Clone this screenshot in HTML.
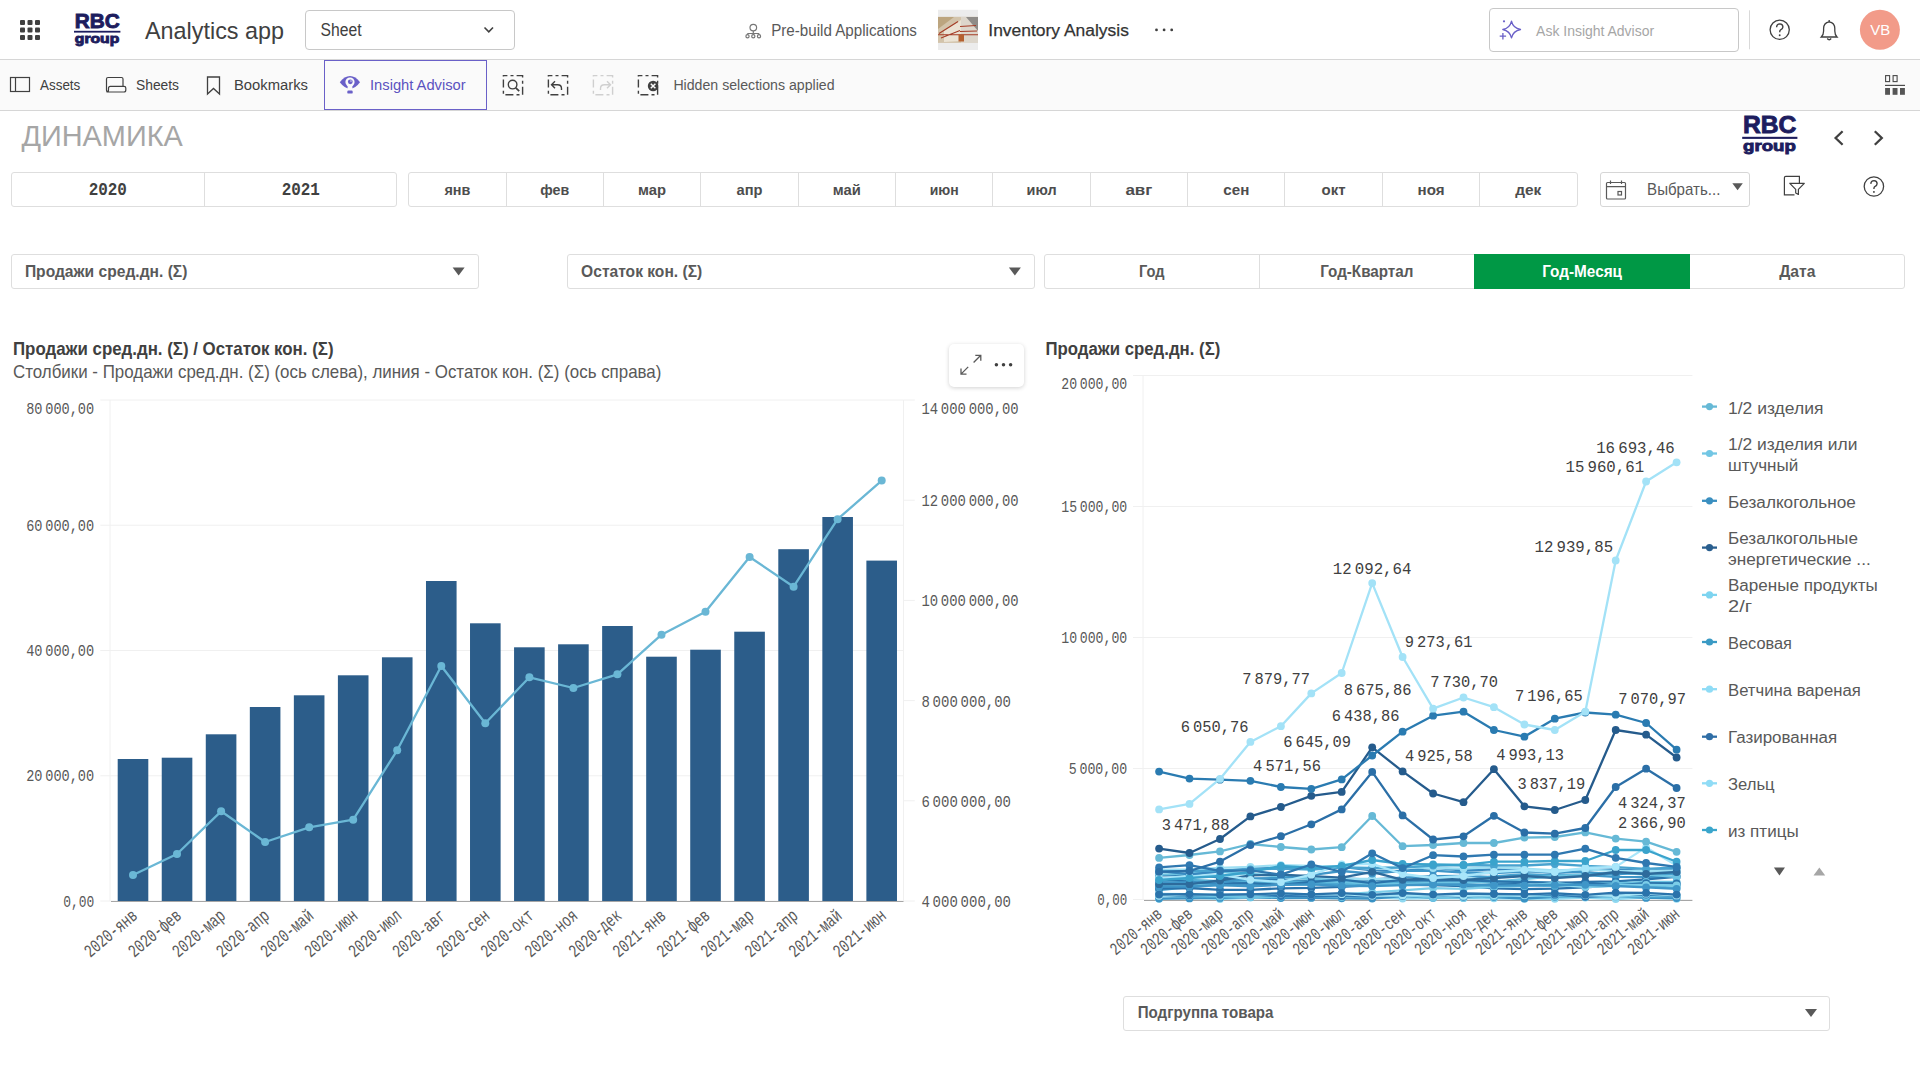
<!DOCTYPE html>
<html><head><meta charset="utf-8"><title>Analytics app - ДИНАМИКА</title>
<style>
html,body{margin:0;padding:0;}
body{width:1920px;height:1080px;overflow:hidden;background:#fff;position:relative;font-family:"Liberation Sans",sans-serif;}
.box{position:absolute;box-sizing:border-box;}
</style></head><body>
<div class="box" style="left:0;top:0;width:1920px;height:60px;background:#fff;border-bottom:1px solid #d6d6d6"></div>
<div class="box" style="left:0;top:60px;width:1920px;height:51px;background:#fafafa;border-bottom:1px solid #d6d6d6"></div>
<div class="box" style="left:305px;top:10px;width:210px;height:40px;border:1px solid #c8c8c8;border-radius:4px;background:#fff"></div>
<div class="box" style="left:1489px;top:8px;width:250px;height:44px;border:1px solid #c8c8c8;border-radius:4px;background:#fff"></div>
<div class="box" style="left:324px;top:60px;width:163px;height:50px;border:1px solid #6a60c8;background:#fafafa"></div>
<div class="box" style="left:11px;top:172px;width:386px;height:35px;border:1px solid #dedede;border-radius:3px;background:#fff"></div>
<div class="box" style="left:204px;top:172px;width:1px;height:35px;background:#dedede"></div>
<div class="box" style="left:408px;top:172px;width:1170px;height:35px;border:1px solid #dedede;border-radius:3px;background:#fff"></div>
<div class="box" style="left:505.6px;top:172px;width:1px;height:35px;background:#dedede"></div>
<div class="box" style="left:603.0px;top:172px;width:1px;height:35px;background:#dedede"></div>
<div class="box" style="left:700.3px;top:172px;width:1px;height:35px;background:#dedede"></div>
<div class="box" style="left:797.7px;top:172px;width:1px;height:35px;background:#dedede"></div>
<div class="box" style="left:895.0px;top:172px;width:1px;height:35px;background:#dedede"></div>
<div class="box" style="left:992.4px;top:172px;width:1px;height:35px;background:#dedede"></div>
<div class="box" style="left:1089.7px;top:172px;width:1px;height:35px;background:#dedede"></div>
<div class="box" style="left:1187.1px;top:172px;width:1px;height:35px;background:#dedede"></div>
<div class="box" style="left:1284.4px;top:172px;width:1px;height:35px;background:#dedede"></div>
<div class="box" style="left:1381.8px;top:172px;width:1px;height:35px;background:#dedede"></div>
<div class="box" style="left:1479.1px;top:172px;width:1px;height:35px;background:#dedede"></div>
<div class="box" style="left:1600px;top:172px;width:150px;height:35px;border:1px solid #d6d6d6;border-radius:3px;background:#fff"></div>
<div class="box" style="left:11px;top:254px;width:468px;height:35px;border:1px solid #dedede;border-radius:3px;background:#fff"></div>
<div class="box" style="left:567px;top:254px;width:468px;height:35px;border:1px solid #dedede;border-radius:3px;background:#fff"></div>
<div class="box" style="left:1044px;top:254px;width:861px;height:35px;border:1px solid #dedede;border-radius:3px;background:#fff"></div>
<div class="box" style="left:1259px;top:254px;width:1px;height:35px;background:#dedede"></div>
<div class="box" style="left:1474px;top:254px;width:216px;height:35px;background:#009845"></div>
<div class="box" style="left:949px;top:344px;width:75px;height:43px;border-radius:5px;background:#fff;box-shadow:0 1px 4px rgba(0,0,0,0.18)"></div>
<div class="box" style="left:1123px;top:996px;width:707px;height:35px;border:1px solid #dedede;border-radius:3px;background:#fff"></div>
<svg width="1920" height="1080" viewBox="0 0 1920 1080" style="position:absolute;left:0;top:0">
<rect x="20.0" y="20.0" width="5" height="5" rx="1" fill="#404040"/>
<rect x="20.0" y="27.5" width="5" height="5" rx="1" fill="#404040"/>
<rect x="20.0" y="35.0" width="5" height="5" rx="1" fill="#404040"/>
<rect x="27.5" y="20.0" width="5" height="5" rx="1" fill="#404040"/>
<rect x="27.5" y="27.5" width="5" height="5" rx="1" fill="#404040"/>
<rect x="27.5" y="35.0" width="5" height="5" rx="1" fill="#404040"/>
<rect x="35.0" y="20.0" width="5" height="5" rx="1" fill="#404040"/>
<rect x="35.0" y="27.5" width="5" height="5" rx="1" fill="#404040"/>
<rect x="35.0" y="35.0" width="5" height="5" rx="1" fill="#404040"/>
<text x="74.8" y="27.8" font-family='"Liberation Sans", sans-serif' font-size="20.40" font-weight="bold" fill="#1d1d5e" text-anchor="start" textLength="45.0" lengthAdjust="spacingAndGlyphs" stroke="#1d1d5e" stroke-width="0.9">RBC</text>
<rect x="74.0" y="30.8" width="46.4" height="1.8" fill="#1d1d5e"/>
<text x="74.8" y="42.7" font-family='"Liberation Sans", sans-serif' font-size="12.64" font-weight="bold" fill="#1d1d5e" text-anchor="start" textLength="44.5" lengthAdjust="spacingAndGlyphs" stroke="#1d1d5e" stroke-width="0.9">group</text>
<text x="145.0" y="39.2" font-family='"Liberation Sans", sans-serif' font-size="24.13" font-weight="normal" fill="#404040" text-anchor="start" textLength="139.0" lengthAdjust="spacingAndGlyphs">Analytics app</text>
<text x="320.6" y="36.3" font-family='"Liberation Sans", sans-serif' font-size="17.44" font-weight="normal" fill="#404040" text-anchor="start" textLength="41.0" lengthAdjust="spacingAndGlyphs">Sheet</text>
<path d="M484.5 27.5 L488.8 31.8 L493 27.5" fill="none" stroke="#404040" stroke-width="1.6"/>
<g fill="none" stroke="#777" stroke-width="1.2"><circle cx="753.3" cy="27.6" r="3.3"/><path d="M753.3 31 V33.5 M747.5 33.5 H759 M747.5 33.5 V34.5 M753.3 33.5 V34.5 M759 33.5 V34.5"/><circle cx="747.5" cy="36.3" r="1.6"/><circle cx="753.3" cy="36.3" r="1.6"/><circle cx="759" cy="36.3" r="1.6"/></g>
<text x="771.2" y="35.6" font-family='"Liberation Sans", sans-serif' font-size="16.42" font-weight="normal" fill="#595959" text-anchor="start" textLength="145.7" lengthAdjust="spacingAndGlyphs">Pre-build Applications</text>
<rect x="938" y="9.8" width="40" height="40.2" fill="#ececec"/>
<rect x="938" y="16.8" width="40" height="26.1" fill="#d3c4ab"/>
<path d="M938 17 H954 L938 29 Z" fill="#bca57f"/>
<path d="M944 31 L961 20 V41 L944 42 Z" fill="#ebe3d4"/>
<path d="M961 17 H978 V43 H961 Z" fill="#ddd6cb"/>
<path d="M966 17 H978 V31 Z" fill="#8f8c88"/>
<path d="M939 33.5 L958 21.5 M941 38 L960 30.5 M960 26.5 L976 25.5 M960 31.5 L977 31 M938 34.8 H978" stroke="#a53c26" stroke-width="1.1" fill="none"/>
<rect x="958.5" y="34.5" width="5.5" height="7" fill="#b5602f"/>
<text x="988.3" y="35.7" font-family='"Liberation Sans", sans-serif' font-size="17.30" font-weight="normal" fill="#333333" text-anchor="start" textLength="140.6" lengthAdjust="spacingAndGlyphs" stroke="#333" stroke-width="0.25">Inventory Analysis</text>
<circle cx="1156.5" cy="29.9" r="1.4" fill="#404040"/>
<circle cx="1164.1" cy="29.9" r="1.4" fill="#404040"/>
<circle cx="1171.7" cy="29.9" r="1.4" fill="#404040"/>
<path d="M1511.5 21.1 Q1513 28 1520.5 29.5 Q1513 31 1511.5 37.9 Q1510 31 1502.8 29.5 Q1510 28 1511.5 21.1 Z" fill="none" stroke="#6a60c8" stroke-width="1.3" stroke-linejoin="round"/>
<path d="M1502.9 33 V39.4 M1499.7 36.2 H1506.1" stroke="#6a60c8" stroke-width="1.3"/>
<circle cx="1504" cy="21.3" r="1.1" fill="#6a60c8"/>
<text x="1536.1" y="36.2" font-family='"Liberation Sans", sans-serif' font-size="15.12" font-weight="normal" fill="#a6a6a6" text-anchor="start" textLength="118.0" lengthAdjust="spacingAndGlyphs">Ask Insight Advisor</text>
<line x1="1749.5" y1="10.3" x2="1749.5" y2="49.3" stroke="#d9d9d9" stroke-width="1"/>
<circle cx="1779.7" cy="29.8" r="9.6" fill="none" stroke="#404040" stroke-width="1.3"/>
<path d="M1776.6 27.2 Q1776.8 23.9 1779.8 23.9 Q1782.9 24 1782.9 27 Q1782.8 29 1780.6 29.9 Q1779.7 30.4 1779.7 32.2" fill="none" stroke="#404040" stroke-width="1.4"/>
<circle cx="1779.7" cy="35.2" r="0.95" fill="#404040"/>
<path d="M1821.3 37 H1837 Q1834.8 34.8 1834.8 31 V28.6 Q1834.8 22.6 1829.2 21.8 Q1823.6 22.6 1823.6 28.6 V31 Q1823.6 34.8 1821.3 37 Z" fill="none" stroke="#404040" stroke-width="1.3"/>
<path d="M1827.2 38.5 Q1829.2 41 1831.2 38.5" fill="none" stroke="#404040" stroke-width="1.3"/>
<circle cx="1829.2" cy="21" r="0.9" fill="#404040"/>
<circle cx="1879.9" cy="29.8" r="20" fill="#f29b89"/>
<text x="1880.2" y="34.9" font-family='"Liberation Sans", sans-serif' font-size="14.83" font-weight="normal" fill="#ffffff" text-anchor="middle" textLength="20.0" lengthAdjust="spacingAndGlyphs">VB</text>
<rect x="10.5" y="77.5" width="19" height="14" fill="none" stroke="#404040" stroke-width="1.2"/>
<line x1="15.5" y1="77.5" x2="15.5" y2="91.5" stroke="#404040" stroke-width="1.2"/>
<text x="40.0" y="89.7" font-family='"Liberation Sans", sans-serif' font-size="14.39" font-weight="normal" fill="#404040" text-anchor="start" textLength="40.3" lengthAdjust="spacingAndGlyphs">Assets</text>
<path d="M106.5 90 V79 Q106.5 77.5 108 77.5 H121.5 Q123 77.5 123 79 V86 M106.5 90 Q106.5 92 108.5 92 H124 Q125.8 92 125.8 90 V88 Q125.8 86.3 124 86.3 H110.3 Q108.5 86.3 108.5 88.3 V90 Q108.5 92 106.5 92" fill="none" stroke="#404040" stroke-width="1.2"/>
<text x="136.0" y="89.7" font-family='"Liberation Sans", sans-serif' font-size="14.39" font-weight="normal" fill="#404040" text-anchor="start" textLength="43.0" lengthAdjust="spacingAndGlyphs">Sheets</text>
<path d="M207.5 77 H219.5 V94 L213.5 88.5 L207.5 94 Z" fill="none" stroke="#404040" stroke-width="1.3"/>
<text x="234.0" y="89.7" font-family='"Liberation Sans", sans-serif' font-size="14.39" font-weight="normal" fill="#404040" text-anchor="start" textLength="74.0" lengthAdjust="spacingAndGlyphs">Bookmarks</text>
<path d="M339.8 82.3 Q344.5 76 350 76 Q355.5 76 360 82.3 Q355.5 88.6 350 88.6 Q344.5 88.6 339.8 82.3 Z" fill="#6a60c8"/>
<circle cx="350" cy="82" r="4.6" fill="#fafafa"/><rect x="347.6" y="84" width="4.8" height="5.2" fill="#fafafa"/>
<circle cx="350.3" cy="81.8" r="2.4" fill="#6a60c8"/><circle cx="351" cy="81" r="0.7" fill="#fafafa"/>
<rect x="347.3" y="90.6" width="5.4" height="3" rx="1.2" fill="#6a60c8"/>
<text x="370.0" y="89.7" font-family='"Liberation Sans", sans-serif' font-size="14.39" font-weight="normal" fill="#5b52c0" text-anchor="start" textLength="95.7" lengthAdjust="spacingAndGlyphs">Insight Advisor</text>
<rect x="503.4" y="75.6" width="19.2" height="19.2" fill="none" stroke="#404040" stroke-width="1.4" stroke-dasharray="8 3.1 3 3.1" stroke-dashoffset="4"/>
<rect x="548.4" y="75.6" width="19.2" height="19.2" fill="none" stroke="#404040" stroke-width="1.4" stroke-dasharray="8 3.1 3 3.1" stroke-dashoffset="4"/>
<rect x="593.4" y="75.6" width="19.2" height="19.2" fill="none" stroke="#cfcfcf" stroke-width="1.4" stroke-dasharray="8 3.1 3 3.1" stroke-dashoffset="4"/>
<rect x="638.4" y="75.6" width="19.2" height="19.2" fill="none" stroke="#404040" stroke-width="1.4" stroke-dasharray="8 3.1 3 3.1" stroke-dashoffset="4"/>
<circle cx="512.6" cy="84.6" r="4.3" fill="none" stroke="#404040" stroke-width="1.4"/><path d="M515.8 87.8 L519.2 91.2" stroke="#404040" stroke-width="1.7"/>
<path d="M555 81.3 L551.5 84.8 L555 88.3 M551.8 84.8 H557.5 Q561.5 84.8 561.5 88.5 V90" fill="none" stroke="#404040" stroke-width="1.4"/>
<path d="M607 81.3 L610.5 84.8 L607 88.3 M610.2 84.8 H604.5 Q600.5 84.8 600.5 88.5 V90" fill="none" stroke="#d0d0d0" stroke-width="1.4"/>
<circle cx="653.1" cy="86" r="5.3" fill="#404040"/><path d="M650.8 83.7 L655.4 88.3 M655.4 83.7 L650.8 88.3" stroke="#fafafa" stroke-width="1.5"/>
<text x="673.4" y="89.9" font-family='"Liberation Sans", sans-serif' font-size="14.53" font-weight="normal" fill="#595959" text-anchor="start" textLength="161.2" lengthAdjust="spacingAndGlyphs">Hidden selections applied</text>
<rect x="1885.6" y="75.6" width="4" height="6" fill="none" stroke="#4a4a4a" stroke-width="1.1"/>
<rect x="1893.1" y="75.6" width="4" height="6" fill="none" stroke="#4a4a4a" stroke-width="1.1"/>
<rect x="1885" y="84.8" width="20" height="1.2" fill="#4a4a4a"/>
<rect x="1885.1" y="88" width="4.9" height="6.8" fill="#555"/>
<rect x="1892.6" y="88" width="4.9" height="6.8" fill="#555"/>
<rect x="1900.0" y="88" width="4.9" height="6.8" fill="#555"/>
<text x="21.4" y="146.0" font-family='"Liberation Sans", sans-serif' font-size="29.94" font-weight="normal" fill="#a6a6a6" text-anchor="start" textLength="161.4" lengthAdjust="spacingAndGlyphs">ДИНАМИКА</text>
<text x="1743.0" y="133.2" font-family='"Liberation Sans", sans-serif' font-size="24.22" font-weight="bold" fill="#1d1d5e" text-anchor="start" textLength="53.4" lengthAdjust="spacingAndGlyphs" stroke="#1d1d5e" stroke-width="0.9">RBC</text>
<rect x="1742.2" y="136.8" width="55.2" height="2.1" fill="#1d1d5e"/>
<text x="1743.0" y="150.8" font-family='"Liberation Sans", sans-serif' font-size="15.01" font-weight="bold" fill="#1d1d5e" text-anchor="start" textLength="52.8" lengthAdjust="spacingAndGlyphs" stroke="#1d1d5e" stroke-width="0.9">group</text>
<path d="M1842.6 131.2 L1835.6 138 L1842.6 144.8" fill="none" stroke="#404040" stroke-width="2.3"/>
<path d="M1874.8 131.2 L1881.8 138 L1874.8 144.8" fill="none" stroke="#404040" stroke-width="2.3"/>
<text x="107.8" y="195.1" font-family='"Liberation Mono", monospace' font-size="17.75" font-weight="bold" fill="#404040" text-anchor="middle" textLength="38.3" lengthAdjust="spacingAndGlyphs">2020</text>
<text x="300.8" y="195.1" font-family='"Liberation Mono", monospace' font-size="17.75" font-weight="bold" fill="#404040" text-anchor="middle" textLength="38.3" lengthAdjust="spacingAndGlyphs">2021</text>
<text x="457.4" y="195.3" font-family='"Liberation Sans", sans-serif' font-size="14.53" font-weight="bold" fill="#4d4d4d" text-anchor="middle" textLength="26.0" lengthAdjust="spacingAndGlyphs">янв</text>
<text x="554.8" y="195.3" font-family='"Liberation Sans", sans-serif' font-size="14.53" font-weight="bold" fill="#4d4d4d" text-anchor="middle" textLength="29.0" lengthAdjust="spacingAndGlyphs">фев</text>
<text x="652.1" y="195.3" font-family='"Liberation Sans", sans-serif' font-size="14.53" font-weight="bold" fill="#4d4d4d" text-anchor="middle" textLength="28.0" lengthAdjust="spacingAndGlyphs">мар</text>
<text x="749.5" y="195.3" font-family='"Liberation Sans", sans-serif' font-size="14.53" font-weight="bold" fill="#4d4d4d" text-anchor="middle" textLength="26.0" lengthAdjust="spacingAndGlyphs">апр</text>
<text x="846.8" y="195.3" font-family='"Liberation Sans", sans-serif' font-size="14.53" font-weight="bold" fill="#4d4d4d" text-anchor="middle" textLength="28.0" lengthAdjust="spacingAndGlyphs">май</text>
<text x="944.2" y="195.3" font-family='"Liberation Sans", sans-serif' font-size="14.53" font-weight="bold" fill="#4d4d4d" text-anchor="middle" textLength="29.0" lengthAdjust="spacingAndGlyphs">июн</text>
<text x="1041.6" y="195.3" font-family='"Liberation Sans", sans-serif' font-size="14.53" font-weight="bold" fill="#4d4d4d" text-anchor="middle" textLength="30.0" lengthAdjust="spacingAndGlyphs">июл</text>
<text x="1138.9" y="195.3" font-family='"Liberation Sans", sans-serif' font-size="14.53" font-weight="bold" fill="#4d4d4d" text-anchor="middle" textLength="27.0" lengthAdjust="spacingAndGlyphs">авг</text>
<text x="1236.3" y="195.3" font-family='"Liberation Sans", sans-serif' font-size="14.53" font-weight="bold" fill="#4d4d4d" text-anchor="middle" textLength="26.0" lengthAdjust="spacingAndGlyphs">сен</text>
<text x="1333.6" y="195.3" font-family='"Liberation Sans", sans-serif' font-size="14.53" font-weight="bold" fill="#4d4d4d" text-anchor="middle" textLength="24.0" lengthAdjust="spacingAndGlyphs">окт</text>
<text x="1431.0" y="195.3" font-family='"Liberation Sans", sans-serif' font-size="14.53" font-weight="bold" fill="#4d4d4d" text-anchor="middle" textLength="27.0" lengthAdjust="spacingAndGlyphs">ноя</text>
<text x="1528.3" y="195.3" font-family='"Liberation Sans", sans-serif' font-size="14.53" font-weight="bold" fill="#4d4d4d" text-anchor="middle" textLength="26.0" lengthAdjust="spacingAndGlyphs">дек</text>
<g fill="none" stroke="#595959" stroke-width="1.2"><rect x="1606.5" y="182.5" width="19" height="16.5" rx="1"/><path d="M1606.5 186.7 H1625.5 M1610.5 180.4 V184 M1621.5 180.4 V184"/><rect x="1618" y="191.5" width="3.5" height="3.5"/></g>
<text x="1647.1" y="194.7" font-family='"Liberation Sans", sans-serif' font-size="17.15" font-weight="normal" fill="#595959" text-anchor="start" textLength="73.3" lengthAdjust="spacingAndGlyphs">Выбрать...</text>
<path d="M1732.3 183.2 H1742.8 L1737.55 190.2 Z" fill="#595959"/>
<path d="M1794.5 194.8 H1784.4 V177.8 Q1784.4 176.4 1785.8 176.4 H1799.4 V183.3" fill="none" stroke="#404040" stroke-width="1.2"/>
<path d="M1789.8 183.3 H1804.3 L1798.4 189.3 V194.5 L1795.7 193 V189.3 Z" fill="none" stroke="#404040" stroke-width="1.2" stroke-linejoin="round"/>
<circle cx="1873.9" cy="186.5" r="9.7" fill="none" stroke="#404040" stroke-width="1.3"/>
<path d="M1870.8 183.9 Q1871 180.6 1874 180.6 Q1877.1 180.7 1877.1 183.7 Q1877 185.7 1874.8 186.6 Q1873.9 187.1 1873.9 188.9" fill="none" stroke="#404040" stroke-width="1.4"/>
<circle cx="1873.9" cy="191.9" r="0.95" fill="#404040"/>
<text x="24.9" y="277.4" font-family='"Liberation Sans", sans-serif' font-size="17.01" font-weight="bold" fill="#595959" text-anchor="start" textLength="162.5" lengthAdjust="spacingAndGlyphs">Продажи сред.дн. (Σ)</text>
<path d="M452.6 267.5 H464.6 L458.6 275.5 Z" fill="#595959"/>
<text x="581.1" y="277.4" font-family='"Liberation Sans", sans-serif' font-size="17.01" font-weight="bold" fill="#595959" text-anchor="start" textLength="121.1" lengthAdjust="spacingAndGlyphs">Остаток кон. (Σ)</text>
<path d="M1008.9 267.5 H1020.9 L1014.9 275.5 Z" fill="#595959"/>
<text x="1151.7" y="277.4" font-family='"Liberation Sans", sans-serif' font-size="17.01" font-weight="bold" fill="#595959" text-anchor="middle" textLength="25.6" lengthAdjust="spacingAndGlyphs">Год</text>
<text x="1366.8" y="277.4" font-family='"Liberation Sans", sans-serif' font-size="17.01" font-weight="bold" fill="#595959" text-anchor="middle" textLength="93.2" lengthAdjust="spacingAndGlyphs">Год-Квартал</text>
<text x="1582.1" y="277.4" font-family='"Liberation Sans", sans-serif' font-size="17.01" font-weight="bold" fill="#ffffff" text-anchor="middle" textLength="79.9" lengthAdjust="spacingAndGlyphs">Год-Месяц</text>
<text x="1797.3" y="277.4" font-family='"Liberation Sans", sans-serif' font-size="17.01" font-weight="bold" fill="#595959" text-anchor="middle" textLength="36.2" lengthAdjust="spacingAndGlyphs">Дата</text>
<text x="1137.7" y="1018.0" font-family='"Liberation Sans", sans-serif' font-size="16.28" font-weight="bold" fill="#595959" text-anchor="start" textLength="135.8" lengthAdjust="spacingAndGlyphs">Подгруппа товара</text>
<path d="M1805 1009 H1817 L1811 1017 Z" fill="#595959"/>
<text x="13.0" y="354.8" font-family='"Liberation Sans", sans-serif' font-size="17.73" font-weight="bold" fill="#404040" text-anchor="start" textLength="320.5" lengthAdjust="spacingAndGlyphs">Продажи сред.дн. (Σ) / Остаток кон. (Σ)</text>
<text x="13.0" y="377.8" font-family='"Liberation Sans", sans-serif' font-size="17.73" font-weight="normal" fill="#595959" text-anchor="start" textLength="648.4" lengthAdjust="spacingAndGlyphs">Столбики - Продажи сред.дн. (Σ) (ось слева), линия - Остаток кон. (Σ) (ось справа)</text>
<line x1="100.3" y1="400.0" x2="903.5" y2="400.0" stroke="#f0f0f0" stroke-width="1"/>
<line x1="100.3" y1="525.2" x2="903.5" y2="525.2" stroke="#f0f0f0" stroke-width="1"/>
<line x1="100.3" y1="650.5" x2="903.5" y2="650.5" stroke="#f0f0f0" stroke-width="1"/>
<line x1="100.3" y1="775.8" x2="903.5" y2="775.8" stroke="#f0f0f0" stroke-width="1"/>
<line x1="100.3" y1="901.0" x2="903.5" y2="901.0" stroke="#f0f0f0" stroke-width="1"/>
<line x1="903.5" y1="400.0" x2="914.8" y2="400.0" stroke="#f0f0f0" stroke-width="1"/>
<line x1="903.5" y1="500.2" x2="914.8" y2="500.2" stroke="#f0f0f0" stroke-width="1"/>
<line x1="903.5" y1="600.4" x2="914.8" y2="600.4" stroke="#f0f0f0" stroke-width="1"/>
<line x1="903.5" y1="700.6" x2="914.8" y2="700.6" stroke="#f0f0f0" stroke-width="1"/>
<line x1="903.5" y1="800.8" x2="914.8" y2="800.8" stroke="#f0f0f0" stroke-width="1"/>
<line x1="903.5" y1="901.0" x2="914.8" y2="901.0" stroke="#f0f0f0" stroke-width="1"/>
<line x1="110" y1="400" x2="110" y2="901" stroke="#f0f0f0" stroke-width="1"/>
<line x1="903.5" y1="400" x2="903.5" y2="901" stroke="#f0f0f0" stroke-width="1"/>
<rect x="117.70" y="759.0" width="30.6" height="142.0" fill="#2c5d8a"/>
<rect x="161.74" y="757.7" width="30.6" height="143.3" fill="#2c5d8a"/>
<rect x="205.78" y="734.3" width="30.6" height="166.7" fill="#2c5d8a"/>
<rect x="249.82" y="707.0" width="30.6" height="194.0" fill="#2c5d8a"/>
<rect x="293.86" y="695.3" width="30.6" height="205.7" fill="#2c5d8a"/>
<rect x="337.90" y="675.3" width="30.6" height="225.7" fill="#2c5d8a"/>
<rect x="381.94" y="657.3" width="30.6" height="243.7" fill="#2c5d8a"/>
<rect x="425.98" y="581.0" width="30.6" height="320.0" fill="#2c5d8a"/>
<rect x="470.02" y="623.3" width="30.6" height="277.7" fill="#2c5d8a"/>
<rect x="514.06" y="647.3" width="30.6" height="253.7" fill="#2c5d8a"/>
<rect x="558.10" y="644.3" width="30.6" height="256.7" fill="#2c5d8a"/>
<rect x="602.14" y="626.0" width="30.6" height="275.0" fill="#2c5d8a"/>
<rect x="646.18" y="656.7" width="30.6" height="244.3" fill="#2c5d8a"/>
<rect x="690.22" y="649.7" width="30.6" height="251.3" fill="#2c5d8a"/>
<rect x="734.26" y="631.7" width="30.6" height="269.3" fill="#2c5d8a"/>
<rect x="778.30" y="549.2" width="30.6" height="351.8" fill="#2c5d8a"/>
<rect x="822.34" y="517.0" width="30.6" height="384.0" fill="#2c5d8a"/>
<rect x="866.38" y="560.6" width="30.6" height="340.4" fill="#2c5d8a"/>
<line x1="111" y1="901.5" x2="903.5" y2="901.5" stroke="#a6a6a6" stroke-width="1.2"/>
<polyline points="133.0,875.0 177.0,854.0 221.1,811.3 265.1,842.0 309.2,827.3 353.2,819.7 397.2,750.3 441.3,666.0 485.3,723.3 529.4,677.3 573.4,688.0 617.4,674.3 661.5,634.7 705.5,611.7 749.6,557.0 793.6,586.7 837.6,519.2 881.7,480.6" fill="none" stroke="#6ab7d5" stroke-width="2.3" stroke-linejoin="round"/>
<circle cx="133.0" cy="875.0" r="4" fill="#6ab7d5"/>
<circle cx="177.0" cy="854.0" r="4" fill="#6ab7d5"/>
<circle cx="221.1" cy="811.3" r="4" fill="#6ab7d5"/>
<circle cx="265.1" cy="842.0" r="4" fill="#6ab7d5"/>
<circle cx="309.2" cy="827.3" r="4" fill="#6ab7d5"/>
<circle cx="353.2" cy="819.7" r="4" fill="#6ab7d5"/>
<circle cx="397.2" cy="750.3" r="4" fill="#6ab7d5"/>
<circle cx="441.3" cy="666.0" r="4" fill="#6ab7d5"/>
<circle cx="485.3" cy="723.3" r="4" fill="#6ab7d5"/>
<circle cx="529.4" cy="677.3" r="4" fill="#6ab7d5"/>
<circle cx="573.4" cy="688.0" r="4" fill="#6ab7d5"/>
<circle cx="617.4" cy="674.3" r="4" fill="#6ab7d5"/>
<circle cx="661.5" cy="634.7" r="4" fill="#6ab7d5"/>
<circle cx="705.5" cy="611.7" r="4" fill="#6ab7d5"/>
<circle cx="749.6" cy="557.0" r="4" fill="#6ab7d5"/>
<circle cx="793.6" cy="586.7" r="4" fill="#6ab7d5"/>
<circle cx="837.6" cy="519.2" r="4" fill="#6ab7d5"/>
<circle cx="881.7" cy="480.6" r="4" fill="#6ab7d5"/>
<text x="94.2" y="413.9" font-family='"Liberation Mono", monospace' font-size="17.00" font-weight="normal" fill="#595959" text-anchor="end" textLength="68.0" lengthAdjust="spacingAndGlyphs">80 000,00</text>
<text x="94.2" y="530.8" font-family='"Liberation Mono", monospace' font-size="17.00" font-weight="normal" fill="#595959" text-anchor="end" textLength="68.0" lengthAdjust="spacingAndGlyphs">60 000,00</text>
<text x="94.2" y="656.0" font-family='"Liberation Mono", monospace' font-size="17.00" font-weight="normal" fill="#595959" text-anchor="end" textLength="68.0" lengthAdjust="spacingAndGlyphs">40 000,00</text>
<text x="94.2" y="781.2" font-family='"Liberation Mono", monospace' font-size="17.00" font-weight="normal" fill="#595959" text-anchor="end" textLength="68.0" lengthAdjust="spacingAndGlyphs">20 000,00</text>
<text x="94.2" y="907.0" font-family='"Liberation Mono", monospace' font-size="17.00" font-weight="normal" fill="#595959" text-anchor="end" textLength="31.0" lengthAdjust="spacingAndGlyphs">0,00</text>
<text x="921.4" y="413.9" font-family='"Liberation Mono", monospace' font-size="17.00" font-weight="normal" fill="#595959" text-anchor="start" textLength="97.3" lengthAdjust="spacingAndGlyphs">14 000 000,00</text>
<text x="921.4" y="506.2" font-family='"Liberation Mono", monospace' font-size="17.00" font-weight="normal" fill="#595959" text-anchor="start" textLength="97.3" lengthAdjust="spacingAndGlyphs">12 000 000,00</text>
<text x="921.4" y="606.4" font-family='"Liberation Mono", monospace' font-size="17.00" font-weight="normal" fill="#595959" text-anchor="start" textLength="97.3" lengthAdjust="spacingAndGlyphs">10 000 000,00</text>
<text x="921.4" y="706.5" font-family='"Liberation Mono", monospace' font-size="17.00" font-weight="normal" fill="#595959" text-anchor="start" textLength="89.6" lengthAdjust="spacingAndGlyphs">8 000 000,00</text>
<text x="921.4" y="806.7" font-family='"Liberation Mono", monospace' font-size="17.00" font-weight="normal" fill="#595959" text-anchor="start" textLength="89.6" lengthAdjust="spacingAndGlyphs">6 000 000,00</text>
<text x="921.4" y="907.0" font-family='"Liberation Mono", monospace' font-size="17.00" font-weight="normal" fill="#595959" text-anchor="start" textLength="89.6" lengthAdjust="spacingAndGlyphs">4 000 000,00</text>
<text x="138.5" y="917.5" font-family='"Liberation Mono", monospace' font-size="18.21" font-weight="normal" fill="#595959" text-anchor="end" textLength="63.0" lengthAdjust="spacingAndGlyphs" transform="rotate(-40 138.5 917.5)">2020-янв</text>
<text x="182.5" y="917.5" font-family='"Liberation Mono", monospace' font-size="18.21" font-weight="normal" fill="#595959" text-anchor="end" textLength="63.0" lengthAdjust="spacingAndGlyphs" transform="rotate(-40 182.5 917.5)">2020-фев</text>
<text x="226.6" y="917.5" font-family='"Liberation Mono", monospace' font-size="18.21" font-weight="normal" fill="#595959" text-anchor="end" textLength="63.0" lengthAdjust="spacingAndGlyphs" transform="rotate(-40 226.6 917.5)">2020-мар</text>
<text x="270.6" y="917.5" font-family='"Liberation Mono", monospace' font-size="18.21" font-weight="normal" fill="#595959" text-anchor="end" textLength="63.0" lengthAdjust="spacingAndGlyphs" transform="rotate(-40 270.6 917.5)">2020-апр</text>
<text x="314.7" y="917.5" font-family='"Liberation Mono", monospace' font-size="18.21" font-weight="normal" fill="#595959" text-anchor="end" textLength="63.0" lengthAdjust="spacingAndGlyphs" transform="rotate(-40 314.7 917.5)">2020-май</text>
<text x="358.7" y="917.5" font-family='"Liberation Mono", monospace' font-size="18.21" font-weight="normal" fill="#595959" text-anchor="end" textLength="63.0" lengthAdjust="spacingAndGlyphs" transform="rotate(-40 358.7 917.5)">2020-июн</text>
<text x="402.7" y="917.5" font-family='"Liberation Mono", monospace' font-size="18.21" font-weight="normal" fill="#595959" text-anchor="end" textLength="63.0" lengthAdjust="spacingAndGlyphs" transform="rotate(-40 402.7 917.5)">2020-июл</text>
<text x="446.8" y="917.5" font-family='"Liberation Mono", monospace' font-size="18.21" font-weight="normal" fill="#595959" text-anchor="end" textLength="63.0" lengthAdjust="spacingAndGlyphs" transform="rotate(-40 446.8 917.5)">2020-авг</text>
<text x="490.8" y="917.5" font-family='"Liberation Mono", monospace' font-size="18.21" font-weight="normal" fill="#595959" text-anchor="end" textLength="63.0" lengthAdjust="spacingAndGlyphs" transform="rotate(-40 490.8 917.5)">2020-сен</text>
<text x="534.9" y="917.5" font-family='"Liberation Mono", monospace' font-size="18.21" font-weight="normal" fill="#595959" text-anchor="end" textLength="63.0" lengthAdjust="spacingAndGlyphs" transform="rotate(-40 534.9 917.5)">2020-окт</text>
<text x="578.9" y="917.5" font-family='"Liberation Mono", monospace' font-size="18.21" font-weight="normal" fill="#595959" text-anchor="end" textLength="63.0" lengthAdjust="spacingAndGlyphs" transform="rotate(-40 578.9 917.5)">2020-ноя</text>
<text x="622.9" y="917.5" font-family='"Liberation Mono", monospace' font-size="18.21" font-weight="normal" fill="#595959" text-anchor="end" textLength="63.0" lengthAdjust="spacingAndGlyphs" transform="rotate(-40 622.9 917.5)">2020-дек</text>
<text x="667.0" y="917.5" font-family='"Liberation Mono", monospace' font-size="18.21" font-weight="normal" fill="#595959" text-anchor="end" textLength="63.0" lengthAdjust="spacingAndGlyphs" transform="rotate(-40 667.0 917.5)">2021-янв</text>
<text x="711.0" y="917.5" font-family='"Liberation Mono", monospace' font-size="18.21" font-weight="normal" fill="#595959" text-anchor="end" textLength="63.0" lengthAdjust="spacingAndGlyphs" transform="rotate(-40 711.0 917.5)">2021-фев</text>
<text x="755.1" y="917.5" font-family='"Liberation Mono", monospace' font-size="18.21" font-weight="normal" fill="#595959" text-anchor="end" textLength="63.0" lengthAdjust="spacingAndGlyphs" transform="rotate(-40 755.1 917.5)">2021-мар</text>
<text x="799.1" y="917.5" font-family='"Liberation Mono", monospace' font-size="18.21" font-weight="normal" fill="#595959" text-anchor="end" textLength="63.0" lengthAdjust="spacingAndGlyphs" transform="rotate(-40 799.1 917.5)">2021-апр</text>
<text x="843.1" y="917.5" font-family='"Liberation Mono", monospace' font-size="18.21" font-weight="normal" fill="#595959" text-anchor="end" textLength="63.0" lengthAdjust="spacingAndGlyphs" transform="rotate(-40 843.1 917.5)">2021-май</text>
<text x="887.2" y="917.5" font-family='"Liberation Mono", monospace' font-size="18.21" font-weight="normal" fill="#595959" text-anchor="end" textLength="63.0" lengthAdjust="spacingAndGlyphs" transform="rotate(-40 887.2 917.5)">2021-июн</text>
<path d="M975.3 355.3 H980.8 V360.8 M980.8 355.3 L973.6 362.5 M961 368.6 V374.1 H966.5 M961 374.1 L968.2 366.9" fill="none" stroke="#595959" stroke-width="1.3"/>
<circle cx="996.4" cy="364.7" r="1.75" fill="#404040"/>
<circle cx="1003.5" cy="364.7" r="1.75" fill="#404040"/>
<circle cx="1010.6" cy="364.7" r="1.75" fill="#404040"/>
<text x="1045.5" y="355.0" font-family='"Liberation Sans", sans-serif' font-size="17.44" font-weight="bold" fill="#404040" text-anchor="start" textLength="174.8" lengthAdjust="spacingAndGlyphs">Продажи сред.дн. (Σ)</text>
<line x1="1133" y1="375.5" x2="1692.4" y2="375.5" stroke="#f0f0f0" stroke-width="1"/>
<line x1="1133" y1="506.5" x2="1692.4" y2="506.5" stroke="#f0f0f0" stroke-width="1"/>
<line x1="1133" y1="637.5" x2="1692.4" y2="637.5" stroke="#f0f0f0" stroke-width="1"/>
<line x1="1133" y1="768.5" x2="1692.4" y2="768.5" stroke="#f0f0f0" stroke-width="1"/>
<line x1="1133" y1="899.5" x2="1692.4" y2="899.5" stroke="#f0f0f0" stroke-width="1"/>
<line x1="1143" y1="375.5" x2="1143" y2="899.5" stroke="#f0f0f0" stroke-width="1"/>
<line x1="1144" y1="900.5" x2="1692.4" y2="900.5" stroke="#a6a6a6" stroke-width="1.2"/>
<text x="1127.2" y="389.2" font-family='"Liberation Mono", monospace' font-size="16.69" font-weight="normal" fill="#595959" text-anchor="end" textLength="65.9" lengthAdjust="spacingAndGlyphs">20 000,00</text>
<text x="1127.2" y="512.0" font-family='"Liberation Mono", monospace' font-size="16.69" font-weight="normal" fill="#595959" text-anchor="end" textLength="65.9" lengthAdjust="spacingAndGlyphs">15 000,00</text>
<text x="1127.2" y="643.0" font-family='"Liberation Mono", monospace' font-size="16.69" font-weight="normal" fill="#595959" text-anchor="end" textLength="65.9" lengthAdjust="spacingAndGlyphs">10 000,00</text>
<text x="1127.2" y="774.0" font-family='"Liberation Mono", monospace' font-size="16.69" font-weight="normal" fill="#595959" text-anchor="end" textLength="58.4" lengthAdjust="spacingAndGlyphs">5 000,00</text>
<text x="1127.2" y="905.2" font-family='"Liberation Mono", monospace' font-size="16.69" font-weight="normal" fill="#595959" text-anchor="end" textLength="30.0" lengthAdjust="spacingAndGlyphs">0,00</text>
<g>
<polyline points="1159.1,885.2 1189.5,883.5 1220.0,883.6 1250.4,883.1 1280.9,881.4 1311.3,881.4 1341.7,879.6 1372.2,879.4 1402.6,877.7 1433.1,876.1 1463.5,875.8 1493.9,877.1 1524.4,875.6 1554.8,874.5 1585.3,875.0 1615.7,876.8 1646.1,877.1 1676.6,876.7" fill="none" stroke="#3f96c8" stroke-width="2.3" stroke-linejoin="round"/>
<circle cx="1159.1" cy="885.2" r="3.9" fill="#3f96c8"/>
<circle cx="1189.5" cy="883.5" r="3.9" fill="#3f96c8"/>
<circle cx="1220.0" cy="883.6" r="3.9" fill="#3f96c8"/>
<circle cx="1250.4" cy="883.1" r="3.9" fill="#3f96c8"/>
<circle cx="1280.9" cy="881.4" r="3.9" fill="#3f96c8"/>
<circle cx="1311.3" cy="881.4" r="3.9" fill="#3f96c8"/>
<circle cx="1341.7" cy="879.6" r="3.9" fill="#3f96c8"/>
<circle cx="1372.2" cy="879.4" r="3.9" fill="#3f96c8"/>
<circle cx="1402.6" cy="877.7" r="3.9" fill="#3f96c8"/>
<circle cx="1433.1" cy="876.1" r="3.9" fill="#3f96c8"/>
<circle cx="1463.5" cy="875.8" r="3.9" fill="#3f96c8"/>
<circle cx="1493.9" cy="877.1" r="3.9" fill="#3f96c8"/>
<circle cx="1524.4" cy="875.6" r="3.9" fill="#3f96c8"/>
<circle cx="1554.8" cy="874.5" r="3.9" fill="#3f96c8"/>
<circle cx="1585.3" cy="875.0" r="3.9" fill="#3f96c8"/>
<circle cx="1615.7" cy="876.8" r="3.9" fill="#3f96c8"/>
<circle cx="1646.1" cy="877.1" r="3.9" fill="#3f96c8"/>
<circle cx="1676.6" cy="876.7" r="3.9" fill="#3f96c8"/>
<polyline points="1159.1,890.1 1189.5,887.2 1220.0,884.1 1250.4,882.5 1280.9,885.1 1311.3,882.5 1341.7,883.1 1372.2,884.3 1402.6,883.2 1433.1,883.6 1463.5,880.1 1493.9,876.5 1524.4,874.1 1554.8,875.5 1585.3,874.9 1615.7,873.4 1646.1,874.1 1676.6,873.8" fill="none" stroke="#48a3cf" stroke-width="2.3" stroke-linejoin="round"/>
<circle cx="1159.1" cy="890.1" r="3.9" fill="#48a3cf"/>
<circle cx="1189.5" cy="887.2" r="3.9" fill="#48a3cf"/>
<circle cx="1220.0" cy="884.1" r="3.9" fill="#48a3cf"/>
<circle cx="1250.4" cy="882.5" r="3.9" fill="#48a3cf"/>
<circle cx="1280.9" cy="885.1" r="3.9" fill="#48a3cf"/>
<circle cx="1311.3" cy="882.5" r="3.9" fill="#48a3cf"/>
<circle cx="1341.7" cy="883.1" r="3.9" fill="#48a3cf"/>
<circle cx="1372.2" cy="884.3" r="3.9" fill="#48a3cf"/>
<circle cx="1402.6" cy="883.2" r="3.9" fill="#48a3cf"/>
<circle cx="1433.1" cy="883.6" r="3.9" fill="#48a3cf"/>
<circle cx="1463.5" cy="880.1" r="3.9" fill="#48a3cf"/>
<circle cx="1493.9" cy="876.5" r="3.9" fill="#48a3cf"/>
<circle cx="1524.4" cy="874.1" r="3.9" fill="#48a3cf"/>
<circle cx="1554.8" cy="875.5" r="3.9" fill="#48a3cf"/>
<circle cx="1585.3" cy="874.9" r="3.9" fill="#48a3cf"/>
<circle cx="1615.7" cy="873.4" r="3.9" fill="#48a3cf"/>
<circle cx="1646.1" cy="874.1" r="3.9" fill="#48a3cf"/>
<circle cx="1676.6" cy="873.8" r="3.9" fill="#48a3cf"/>
<polyline points="1159.1,887.7 1189.5,886.0 1220.0,885.2 1250.4,885.1 1280.9,884.5 1311.3,884.3 1341.7,884.7 1372.2,883.0 1402.6,883.0 1433.1,881.7 1463.5,881.0 1493.9,882.8 1524.4,882.5 1554.8,884.4 1585.3,882.6 1615.7,882.9 1646.1,884.1 1676.6,885.4" fill="none" stroke="#52aed5" stroke-width="2.3" stroke-linejoin="round"/>
<circle cx="1159.1" cy="887.7" r="3.9" fill="#52aed5"/>
<circle cx="1189.5" cy="886.0" r="3.9" fill="#52aed5"/>
<circle cx="1220.0" cy="885.2" r="3.9" fill="#52aed5"/>
<circle cx="1250.4" cy="885.1" r="3.9" fill="#52aed5"/>
<circle cx="1280.9" cy="884.5" r="3.9" fill="#52aed5"/>
<circle cx="1311.3" cy="884.3" r="3.9" fill="#52aed5"/>
<circle cx="1341.7" cy="884.7" r="3.9" fill="#52aed5"/>
<circle cx="1372.2" cy="883.0" r="3.9" fill="#52aed5"/>
<circle cx="1402.6" cy="883.0" r="3.9" fill="#52aed5"/>
<circle cx="1433.1" cy="881.7" r="3.9" fill="#52aed5"/>
<circle cx="1463.5" cy="881.0" r="3.9" fill="#52aed5"/>
<circle cx="1493.9" cy="882.8" r="3.9" fill="#52aed5"/>
<circle cx="1524.4" cy="882.5" r="3.9" fill="#52aed5"/>
<circle cx="1554.8" cy="884.4" r="3.9" fill="#52aed5"/>
<circle cx="1585.3" cy="882.6" r="3.9" fill="#52aed5"/>
<circle cx="1615.7" cy="882.9" r="3.9" fill="#52aed5"/>
<circle cx="1646.1" cy="884.1" r="3.9" fill="#52aed5"/>
<circle cx="1676.6" cy="885.4" r="3.9" fill="#52aed5"/>
<polyline points="1159.1,875.4 1189.5,875.2 1220.0,877.4 1250.4,880.3 1280.9,880.1 1311.3,881.2 1341.7,878.3 1372.2,879.7 1402.6,880.6 1433.1,883.9 1463.5,886.0 1493.9,884.6 1524.4,883.8 1554.8,884.9 1585.3,881.8 1615.7,881.5 1646.1,879.4 1676.6,876.8" fill="none" stroke="#2a73ab" stroke-width="2.3" stroke-linejoin="round"/>
<circle cx="1159.1" cy="875.4" r="3.9" fill="#2a73ab"/>
<circle cx="1189.5" cy="875.2" r="3.9" fill="#2a73ab"/>
<circle cx="1220.0" cy="877.4" r="3.9" fill="#2a73ab"/>
<circle cx="1250.4" cy="880.3" r="3.9" fill="#2a73ab"/>
<circle cx="1280.9" cy="880.1" r="3.9" fill="#2a73ab"/>
<circle cx="1311.3" cy="881.2" r="3.9" fill="#2a73ab"/>
<circle cx="1341.7" cy="878.3" r="3.9" fill="#2a73ab"/>
<circle cx="1372.2" cy="879.7" r="3.9" fill="#2a73ab"/>
<circle cx="1402.6" cy="880.6" r="3.9" fill="#2a73ab"/>
<circle cx="1433.1" cy="883.9" r="3.9" fill="#2a73ab"/>
<circle cx="1463.5" cy="886.0" r="3.9" fill="#2a73ab"/>
<circle cx="1493.9" cy="884.6" r="3.9" fill="#2a73ab"/>
<circle cx="1524.4" cy="883.8" r="3.9" fill="#2a73ab"/>
<circle cx="1554.8" cy="884.9" r="3.9" fill="#2a73ab"/>
<circle cx="1585.3" cy="881.8" r="3.9" fill="#2a73ab"/>
<circle cx="1615.7" cy="881.5" r="3.9" fill="#2a73ab"/>
<circle cx="1646.1" cy="879.4" r="3.9" fill="#2a73ab"/>
<circle cx="1676.6" cy="876.8" r="3.9" fill="#2a73ab"/>
<polyline points="1159.1,888.5 1189.5,888.0 1220.0,889.9 1250.4,889.9 1280.9,888.3 1311.3,887.9 1341.7,886.8 1372.2,885.1 1402.6,884.8 1433.1,885.0 1463.5,886.0 1493.9,888.3 1524.4,889.2 1554.8,888.6 1585.3,887.3 1615.7,885.4 1646.1,883.7 1676.6,884.5" fill="none" stroke="#2a73ab" stroke-width="2.3" stroke-linejoin="round"/>
<circle cx="1159.1" cy="888.5" r="3.9" fill="#2a73ab"/>
<circle cx="1189.5" cy="888.0" r="3.9" fill="#2a73ab"/>
<circle cx="1220.0" cy="889.9" r="3.9" fill="#2a73ab"/>
<circle cx="1250.4" cy="889.9" r="3.9" fill="#2a73ab"/>
<circle cx="1280.9" cy="888.3" r="3.9" fill="#2a73ab"/>
<circle cx="1311.3" cy="887.9" r="3.9" fill="#2a73ab"/>
<circle cx="1341.7" cy="886.8" r="3.9" fill="#2a73ab"/>
<circle cx="1372.2" cy="885.1" r="3.9" fill="#2a73ab"/>
<circle cx="1402.6" cy="884.8" r="3.9" fill="#2a73ab"/>
<circle cx="1433.1" cy="885.0" r="3.9" fill="#2a73ab"/>
<circle cx="1463.5" cy="886.0" r="3.9" fill="#2a73ab"/>
<circle cx="1493.9" cy="888.3" r="3.9" fill="#2a73ab"/>
<circle cx="1524.4" cy="889.2" r="3.9" fill="#2a73ab"/>
<circle cx="1554.8" cy="888.6" r="3.9" fill="#2a73ab"/>
<circle cx="1585.3" cy="887.3" r="3.9" fill="#2a73ab"/>
<circle cx="1615.7" cy="885.4" r="3.9" fill="#2a73ab"/>
<circle cx="1646.1" cy="883.7" r="3.9" fill="#2a73ab"/>
<circle cx="1676.6" cy="884.5" r="3.9" fill="#2a73ab"/>
<polyline points="1159.1,878.8 1189.5,875.6 1220.0,875.1 1250.4,874.2 1280.9,874.6 1311.3,877.6 1341.7,878.9 1372.2,879.0 1402.6,879.7 1433.1,880.9 1463.5,878.0 1493.9,880.6 1524.4,882.4 1554.8,884.8 1585.3,886.8 1615.7,886.1 1646.1,885.4 1676.6,882.8" fill="none" stroke="#9ddff3" stroke-width="2.3" stroke-linejoin="round"/>
<circle cx="1159.1" cy="878.8" r="3.9" fill="#9ddff3"/>
<circle cx="1189.5" cy="875.6" r="3.9" fill="#9ddff3"/>
<circle cx="1220.0" cy="875.1" r="3.9" fill="#9ddff3"/>
<circle cx="1250.4" cy="874.2" r="3.9" fill="#9ddff3"/>
<circle cx="1280.9" cy="874.6" r="3.9" fill="#9ddff3"/>
<circle cx="1311.3" cy="877.6" r="3.9" fill="#9ddff3"/>
<circle cx="1341.7" cy="878.9" r="3.9" fill="#9ddff3"/>
<circle cx="1372.2" cy="879.0" r="3.9" fill="#9ddff3"/>
<circle cx="1402.6" cy="879.7" r="3.9" fill="#9ddff3"/>
<circle cx="1433.1" cy="880.9" r="3.9" fill="#9ddff3"/>
<circle cx="1463.5" cy="878.0" r="3.9" fill="#9ddff3"/>
<circle cx="1493.9" cy="880.6" r="3.9" fill="#9ddff3"/>
<circle cx="1524.4" cy="882.4" r="3.9" fill="#9ddff3"/>
<circle cx="1554.8" cy="884.8" r="3.9" fill="#9ddff3"/>
<circle cx="1585.3" cy="886.8" r="3.9" fill="#9ddff3"/>
<circle cx="1615.7" cy="886.1" r="3.9" fill="#9ddff3"/>
<circle cx="1646.1" cy="885.4" r="3.9" fill="#9ddff3"/>
<circle cx="1676.6" cy="882.8" r="3.9" fill="#9ddff3"/>
<polyline points="1159.1,884.6 1189.5,884.4 1220.0,882.7 1250.4,883.2 1280.9,881.5 1311.3,881.8 1341.7,881.9 1372.2,883.8 1402.6,884.3 1433.1,882.5 1463.5,881.3 1493.9,880.8 1524.4,881.3 1554.8,883.2 1585.3,883.6 1615.7,883.5 1646.1,881.9 1676.6,881.9" fill="none" stroke="#6cc3e2" stroke-width="2.3" stroke-linejoin="round"/>
<circle cx="1159.1" cy="884.6" r="3.9" fill="#6cc3e2"/>
<circle cx="1189.5" cy="884.4" r="3.9" fill="#6cc3e2"/>
<circle cx="1220.0" cy="882.7" r="3.9" fill="#6cc3e2"/>
<circle cx="1250.4" cy="883.2" r="3.9" fill="#6cc3e2"/>
<circle cx="1280.9" cy="881.5" r="3.9" fill="#6cc3e2"/>
<circle cx="1311.3" cy="881.8" r="3.9" fill="#6cc3e2"/>
<circle cx="1341.7" cy="881.9" r="3.9" fill="#6cc3e2"/>
<circle cx="1372.2" cy="883.8" r="3.9" fill="#6cc3e2"/>
<circle cx="1402.6" cy="884.3" r="3.9" fill="#6cc3e2"/>
<circle cx="1433.1" cy="882.5" r="3.9" fill="#6cc3e2"/>
<circle cx="1463.5" cy="881.3" r="3.9" fill="#6cc3e2"/>
<circle cx="1493.9" cy="880.8" r="3.9" fill="#6cc3e2"/>
<circle cx="1524.4" cy="881.3" r="3.9" fill="#6cc3e2"/>
<circle cx="1554.8" cy="883.2" r="3.9" fill="#6cc3e2"/>
<circle cx="1585.3" cy="883.6" r="3.9" fill="#6cc3e2"/>
<circle cx="1615.7" cy="883.5" r="3.9" fill="#6cc3e2"/>
<circle cx="1646.1" cy="881.9" r="3.9" fill="#6cc3e2"/>
<circle cx="1676.6" cy="881.9" r="3.9" fill="#6cc3e2"/>
<polyline points="1159.1,878.8 1189.5,880.0 1220.0,881.2 1250.4,881.1 1280.9,882.0 1311.3,882.1 1341.7,880.6 1372.2,882.8 1402.6,882.2 1433.1,883.1 1463.5,885.1 1493.9,886.4 1524.4,885.4 1554.8,886.1 1585.3,884.1 1615.7,885.8 1646.1,885.9 1676.6,887.8" fill="none" stroke="#52aed5" stroke-width="2.3" stroke-linejoin="round"/>
<circle cx="1159.1" cy="878.8" r="3.9" fill="#52aed5"/>
<circle cx="1189.5" cy="880.0" r="3.9" fill="#52aed5"/>
<circle cx="1220.0" cy="881.2" r="3.9" fill="#52aed5"/>
<circle cx="1250.4" cy="881.1" r="3.9" fill="#52aed5"/>
<circle cx="1280.9" cy="882.0" r="3.9" fill="#52aed5"/>
<circle cx="1311.3" cy="882.1" r="3.9" fill="#52aed5"/>
<circle cx="1341.7" cy="880.6" r="3.9" fill="#52aed5"/>
<circle cx="1372.2" cy="882.8" r="3.9" fill="#52aed5"/>
<circle cx="1402.6" cy="882.2" r="3.9" fill="#52aed5"/>
<circle cx="1433.1" cy="883.1" r="3.9" fill="#52aed5"/>
<circle cx="1463.5" cy="885.1" r="3.9" fill="#52aed5"/>
<circle cx="1493.9" cy="886.4" r="3.9" fill="#52aed5"/>
<circle cx="1524.4" cy="885.4" r="3.9" fill="#52aed5"/>
<circle cx="1554.8" cy="886.1" r="3.9" fill="#52aed5"/>
<circle cx="1585.3" cy="884.1" r="3.9" fill="#52aed5"/>
<circle cx="1615.7" cy="885.8" r="3.9" fill="#52aed5"/>
<circle cx="1646.1" cy="885.9" r="3.9" fill="#52aed5"/>
<circle cx="1676.6" cy="887.8" r="3.9" fill="#52aed5"/>
<polyline points="1159.1,874.7 1189.5,873.6 1220.0,871.9 1250.4,873.8 1280.9,876.8 1311.3,879.0 1341.7,880.9 1372.2,882.9 1402.6,884.4 1433.1,882.7 1463.5,882.8 1493.9,881.9 1524.4,879.0 1554.8,876.0 1585.3,874.7 1615.7,873.2 1646.1,874.4 1676.6,877.2" fill="none" stroke="#6cc3e2" stroke-width="2.3" stroke-linejoin="round"/>
<circle cx="1159.1" cy="874.7" r="3.9" fill="#6cc3e2"/>
<circle cx="1189.5" cy="873.6" r="3.9" fill="#6cc3e2"/>
<circle cx="1220.0" cy="871.9" r="3.9" fill="#6cc3e2"/>
<circle cx="1250.4" cy="873.8" r="3.9" fill="#6cc3e2"/>
<circle cx="1280.9" cy="876.8" r="3.9" fill="#6cc3e2"/>
<circle cx="1311.3" cy="879.0" r="3.9" fill="#6cc3e2"/>
<circle cx="1341.7" cy="880.9" r="3.9" fill="#6cc3e2"/>
<circle cx="1372.2" cy="882.9" r="3.9" fill="#6cc3e2"/>
<circle cx="1402.6" cy="884.4" r="3.9" fill="#6cc3e2"/>
<circle cx="1433.1" cy="882.7" r="3.9" fill="#6cc3e2"/>
<circle cx="1463.5" cy="882.8" r="3.9" fill="#6cc3e2"/>
<circle cx="1493.9" cy="881.9" r="3.9" fill="#6cc3e2"/>
<circle cx="1524.4" cy="879.0" r="3.9" fill="#6cc3e2"/>
<circle cx="1554.8" cy="876.0" r="3.9" fill="#6cc3e2"/>
<circle cx="1585.3" cy="874.7" r="3.9" fill="#6cc3e2"/>
<circle cx="1615.7" cy="873.2" r="3.9" fill="#6cc3e2"/>
<circle cx="1646.1" cy="874.4" r="3.9" fill="#6cc3e2"/>
<circle cx="1676.6" cy="877.2" r="3.9" fill="#6cc3e2"/>
<polyline points="1159.1,870.9 1189.5,874.4 1220.0,871.3 1250.4,868.4 1280.9,868.1 1311.3,866.9 1341.7,866.8 1372.2,870.4 1402.6,871.2 1433.1,867.5 1463.5,870.5 1493.9,869.4 1524.4,870.4 1554.8,872.9 1585.3,870.1 1615.7,869.3 1646.1,870.8 1676.6,868.6" fill="none" stroke="#3889c0" stroke-width="2.3" stroke-linejoin="round"/>
<circle cx="1159.1" cy="870.9" r="3.9" fill="#3889c0"/>
<circle cx="1189.5" cy="874.4" r="3.9" fill="#3889c0"/>
<circle cx="1220.0" cy="871.3" r="3.9" fill="#3889c0"/>
<circle cx="1250.4" cy="868.4" r="3.9" fill="#3889c0"/>
<circle cx="1280.9" cy="868.1" r="3.9" fill="#3889c0"/>
<circle cx="1311.3" cy="866.9" r="3.9" fill="#3889c0"/>
<circle cx="1341.7" cy="866.8" r="3.9" fill="#3889c0"/>
<circle cx="1372.2" cy="870.4" r="3.9" fill="#3889c0"/>
<circle cx="1402.6" cy="871.2" r="3.9" fill="#3889c0"/>
<circle cx="1433.1" cy="867.5" r="3.9" fill="#3889c0"/>
<circle cx="1463.5" cy="870.5" r="3.9" fill="#3889c0"/>
<circle cx="1493.9" cy="869.4" r="3.9" fill="#3889c0"/>
<circle cx="1524.4" cy="870.4" r="3.9" fill="#3889c0"/>
<circle cx="1554.8" cy="872.9" r="3.9" fill="#3889c0"/>
<circle cx="1585.3" cy="870.1" r="3.9" fill="#3889c0"/>
<circle cx="1615.7" cy="869.3" r="3.9" fill="#3889c0"/>
<circle cx="1646.1" cy="870.8" r="3.9" fill="#3889c0"/>
<circle cx="1676.6" cy="868.6" r="3.9" fill="#3889c0"/>
<polyline points="1159.1,878.9 1189.5,881.9 1220.0,883.5 1250.4,883.2 1280.9,884.9 1311.3,882.0 1341.7,879.7 1372.2,883.1 1402.6,879.8 1433.1,880.5 1463.5,880.2 1493.9,881.3 1524.4,882.1 1554.8,882.7 1585.3,882.5 1615.7,885.5 1646.1,883.2 1676.6,883.5" fill="none" stroke="#2a73ab" stroke-width="2.3" stroke-linejoin="round"/>
<circle cx="1159.1" cy="878.9" r="3.9" fill="#2a73ab"/>
<circle cx="1189.5" cy="881.9" r="3.9" fill="#2a73ab"/>
<circle cx="1220.0" cy="883.5" r="3.9" fill="#2a73ab"/>
<circle cx="1250.4" cy="883.2" r="3.9" fill="#2a73ab"/>
<circle cx="1280.9" cy="884.9" r="3.9" fill="#2a73ab"/>
<circle cx="1311.3" cy="882.0" r="3.9" fill="#2a73ab"/>
<circle cx="1341.7" cy="879.7" r="3.9" fill="#2a73ab"/>
<circle cx="1372.2" cy="883.1" r="3.9" fill="#2a73ab"/>
<circle cx="1402.6" cy="879.8" r="3.9" fill="#2a73ab"/>
<circle cx="1433.1" cy="880.5" r="3.9" fill="#2a73ab"/>
<circle cx="1463.5" cy="880.2" r="3.9" fill="#2a73ab"/>
<circle cx="1493.9" cy="881.3" r="3.9" fill="#2a73ab"/>
<circle cx="1524.4" cy="882.1" r="3.9" fill="#2a73ab"/>
<circle cx="1554.8" cy="882.7" r="3.9" fill="#2a73ab"/>
<circle cx="1585.3" cy="882.5" r="3.9" fill="#2a73ab"/>
<circle cx="1615.7" cy="885.5" r="3.9" fill="#2a73ab"/>
<circle cx="1646.1" cy="883.2" r="3.9" fill="#2a73ab"/>
<circle cx="1676.6" cy="883.5" r="3.9" fill="#2a73ab"/>
<polyline points="1159.1,894.0 1189.5,894.2 1220.0,897.0 1250.4,896.4 1280.9,897.0 1311.3,897.0 1341.7,894.4 1372.2,892.3 1402.6,890.4 1433.1,888.1 1463.5,888.9 1493.9,886.8 1524.4,886.1 1554.8,882.8 1585.3,886.4 1615.7,885.1 1646.1,884.8 1676.6,885.5" fill="none" stroke="#7bcde8" stroke-width="2.3" stroke-linejoin="round"/>
<circle cx="1159.1" cy="894.0" r="3.9" fill="#7bcde8"/>
<circle cx="1189.5" cy="894.2" r="3.9" fill="#7bcde8"/>
<circle cx="1220.0" cy="897.0" r="3.9" fill="#7bcde8"/>
<circle cx="1250.4" cy="896.4" r="3.9" fill="#7bcde8"/>
<circle cx="1280.9" cy="897.0" r="3.9" fill="#7bcde8"/>
<circle cx="1311.3" cy="897.0" r="3.9" fill="#7bcde8"/>
<circle cx="1341.7" cy="894.4" r="3.9" fill="#7bcde8"/>
<circle cx="1372.2" cy="892.3" r="3.9" fill="#7bcde8"/>
<circle cx="1402.6" cy="890.4" r="3.9" fill="#7bcde8"/>
<circle cx="1433.1" cy="888.1" r="3.9" fill="#7bcde8"/>
<circle cx="1463.5" cy="888.9" r="3.9" fill="#7bcde8"/>
<circle cx="1493.9" cy="886.8" r="3.9" fill="#7bcde8"/>
<circle cx="1524.4" cy="886.1" r="3.9" fill="#7bcde8"/>
<circle cx="1554.8" cy="882.8" r="3.9" fill="#7bcde8"/>
<circle cx="1585.3" cy="886.4" r="3.9" fill="#7bcde8"/>
<circle cx="1615.7" cy="885.1" r="3.9" fill="#7bcde8"/>
<circle cx="1646.1" cy="884.8" r="3.9" fill="#7bcde8"/>
<circle cx="1676.6" cy="885.5" r="3.9" fill="#7bcde8"/>
<polyline points="1159.1,882.1 1189.5,882.3 1220.0,882.5 1250.4,878.5 1280.9,877.9 1311.3,875.2 1341.7,871.0 1372.2,873.6 1402.6,870.8 1433.1,870.6 1463.5,872.5 1493.9,873.0 1524.4,871.5 1554.8,871.6 1585.3,872.1 1615.7,874.5 1646.1,871.2 1676.6,871.7" fill="none" stroke="#3f96c8" stroke-width="2.3" stroke-linejoin="round"/>
<circle cx="1159.1" cy="882.1" r="3.9" fill="#3f96c8"/>
<circle cx="1189.5" cy="882.3" r="3.9" fill="#3f96c8"/>
<circle cx="1220.0" cy="882.5" r="3.9" fill="#3f96c8"/>
<circle cx="1250.4" cy="878.5" r="3.9" fill="#3f96c8"/>
<circle cx="1280.9" cy="877.9" r="3.9" fill="#3f96c8"/>
<circle cx="1311.3" cy="875.2" r="3.9" fill="#3f96c8"/>
<circle cx="1341.7" cy="871.0" r="3.9" fill="#3f96c8"/>
<circle cx="1372.2" cy="873.6" r="3.9" fill="#3f96c8"/>
<circle cx="1402.6" cy="870.8" r="3.9" fill="#3f96c8"/>
<circle cx="1433.1" cy="870.6" r="3.9" fill="#3f96c8"/>
<circle cx="1463.5" cy="872.5" r="3.9" fill="#3f96c8"/>
<circle cx="1493.9" cy="873.0" r="3.9" fill="#3f96c8"/>
<circle cx="1524.4" cy="871.5" r="3.9" fill="#3f96c8"/>
<circle cx="1554.8" cy="871.6" r="3.9" fill="#3f96c8"/>
<circle cx="1585.3" cy="872.1" r="3.9" fill="#3f96c8"/>
<circle cx="1615.7" cy="874.5" r="3.9" fill="#3f96c8"/>
<circle cx="1646.1" cy="871.2" r="3.9" fill="#3f96c8"/>
<circle cx="1676.6" cy="871.7" r="3.9" fill="#3f96c8"/>
<polyline points="1159.1,886.7 1189.5,886.6 1220.0,885.0 1250.4,886.3 1280.9,884.9 1311.3,884.3 1341.7,885.9 1372.2,886.2 1402.6,885.2 1433.1,884.5 1463.5,884.5 1493.9,885.5 1524.4,885.6 1554.8,884.7 1585.3,884.8 1615.7,886.0 1646.1,887.4 1676.6,888.8" fill="none" stroke="#3f96c8" stroke-width="2.3" stroke-linejoin="round"/>
<circle cx="1159.1" cy="886.7" r="3.9" fill="#3f96c8"/>
<circle cx="1189.5" cy="886.6" r="3.9" fill="#3f96c8"/>
<circle cx="1220.0" cy="885.0" r="3.9" fill="#3f96c8"/>
<circle cx="1250.4" cy="886.3" r="3.9" fill="#3f96c8"/>
<circle cx="1280.9" cy="884.9" r="3.9" fill="#3f96c8"/>
<circle cx="1311.3" cy="884.3" r="3.9" fill="#3f96c8"/>
<circle cx="1341.7" cy="885.9" r="3.9" fill="#3f96c8"/>
<circle cx="1372.2" cy="886.2" r="3.9" fill="#3f96c8"/>
<circle cx="1402.6" cy="885.2" r="3.9" fill="#3f96c8"/>
<circle cx="1433.1" cy="884.5" r="3.9" fill="#3f96c8"/>
<circle cx="1463.5" cy="884.5" r="3.9" fill="#3f96c8"/>
<circle cx="1493.9" cy="885.5" r="3.9" fill="#3f96c8"/>
<circle cx="1524.4" cy="885.6" r="3.9" fill="#3f96c8"/>
<circle cx="1554.8" cy="884.7" r="3.9" fill="#3f96c8"/>
<circle cx="1585.3" cy="884.8" r="3.9" fill="#3f96c8"/>
<circle cx="1615.7" cy="886.0" r="3.9" fill="#3f96c8"/>
<circle cx="1646.1" cy="887.4" r="3.9" fill="#3f96c8"/>
<circle cx="1676.6" cy="888.8" r="3.9" fill="#3f96c8"/>
<polyline points="1159.1,869.7 1189.5,869.5 1220.0,867.9 1250.4,866.9 1280.9,865.2 1311.3,865.9 1341.7,867.0 1372.2,868.5 1402.6,867.2 1433.1,868.0 1463.5,868.6 1493.9,867.2 1524.4,868.7 1554.8,870.5 1585.3,869.4 1615.7,871.1 1646.1,870.8 1676.6,870.7" fill="none" stroke="#9ddff3" stroke-width="2.3" stroke-linejoin="round"/>
<circle cx="1159.1" cy="869.7" r="3.9" fill="#9ddff3"/>
<circle cx="1189.5" cy="869.5" r="3.9" fill="#9ddff3"/>
<circle cx="1220.0" cy="867.9" r="3.9" fill="#9ddff3"/>
<circle cx="1250.4" cy="866.9" r="3.9" fill="#9ddff3"/>
<circle cx="1280.9" cy="865.2" r="3.9" fill="#9ddff3"/>
<circle cx="1311.3" cy="865.9" r="3.9" fill="#9ddff3"/>
<circle cx="1341.7" cy="867.0" r="3.9" fill="#9ddff3"/>
<circle cx="1372.2" cy="868.5" r="3.9" fill="#9ddff3"/>
<circle cx="1402.6" cy="867.2" r="3.9" fill="#9ddff3"/>
<circle cx="1433.1" cy="868.0" r="3.9" fill="#9ddff3"/>
<circle cx="1463.5" cy="868.6" r="3.9" fill="#9ddff3"/>
<circle cx="1493.9" cy="867.2" r="3.9" fill="#9ddff3"/>
<circle cx="1524.4" cy="868.7" r="3.9" fill="#9ddff3"/>
<circle cx="1554.8" cy="870.5" r="3.9" fill="#9ddff3"/>
<circle cx="1585.3" cy="869.4" r="3.9" fill="#9ddff3"/>
<circle cx="1615.7" cy="871.1" r="3.9" fill="#9ddff3"/>
<circle cx="1646.1" cy="870.8" r="3.9" fill="#9ddff3"/>
<circle cx="1676.6" cy="870.7" r="3.9" fill="#9ddff3"/>
<polyline points="1159.1,871.1 1189.5,871.1 1220.0,870.5 1250.4,869.3 1280.9,868.6 1311.3,869.5 1341.7,867.6 1372.2,867.8 1402.6,867.5 1433.1,865.6 1463.5,865.0 1493.9,865.4 1524.4,865.5 1554.8,864.0 1585.3,865.9 1615.7,867.1 1646.1,868.9 1676.6,867.4" fill="none" stroke="#48a3cf" stroke-width="2.3" stroke-linejoin="round"/>
<circle cx="1159.1" cy="871.1" r="3.9" fill="#48a3cf"/>
<circle cx="1189.5" cy="871.1" r="3.9" fill="#48a3cf"/>
<circle cx="1220.0" cy="870.5" r="3.9" fill="#48a3cf"/>
<circle cx="1250.4" cy="869.3" r="3.9" fill="#48a3cf"/>
<circle cx="1280.9" cy="868.6" r="3.9" fill="#48a3cf"/>
<circle cx="1311.3" cy="869.5" r="3.9" fill="#48a3cf"/>
<circle cx="1341.7" cy="867.6" r="3.9" fill="#48a3cf"/>
<circle cx="1372.2" cy="867.8" r="3.9" fill="#48a3cf"/>
<circle cx="1402.6" cy="867.5" r="3.9" fill="#48a3cf"/>
<circle cx="1433.1" cy="865.6" r="3.9" fill="#48a3cf"/>
<circle cx="1463.5" cy="865.0" r="3.9" fill="#48a3cf"/>
<circle cx="1493.9" cy="865.4" r="3.9" fill="#48a3cf"/>
<circle cx="1524.4" cy="865.5" r="3.9" fill="#48a3cf"/>
<circle cx="1554.8" cy="864.0" r="3.9" fill="#48a3cf"/>
<circle cx="1585.3" cy="865.9" r="3.9" fill="#48a3cf"/>
<circle cx="1615.7" cy="867.1" r="3.9" fill="#48a3cf"/>
<circle cx="1646.1" cy="868.9" r="3.9" fill="#48a3cf"/>
<circle cx="1676.6" cy="867.4" r="3.9" fill="#48a3cf"/>
<polyline points="1159.1,898.8 1189.5,897.2 1220.0,899.0 1250.4,897.6 1280.9,897.5 1311.3,897.4 1341.7,897.8 1372.2,897.1 1402.6,898.5 1433.1,898.2 1463.5,898.2 1493.9,898.3 1524.4,898.7 1554.8,898.8 1585.3,897.5 1615.7,899.0 1646.1,897.3 1676.6,898.8" fill="none" stroke="#8fd8f0" stroke-width="2.3" stroke-linejoin="round"/>
<circle cx="1159.1" cy="898.8" r="3.9" fill="#8fd8f0"/>
<circle cx="1189.5" cy="897.2" r="3.9" fill="#8fd8f0"/>
<circle cx="1220.0" cy="899.0" r="3.9" fill="#8fd8f0"/>
<circle cx="1250.4" cy="897.6" r="3.9" fill="#8fd8f0"/>
<circle cx="1280.9" cy="897.5" r="3.9" fill="#8fd8f0"/>
<circle cx="1311.3" cy="897.4" r="3.9" fill="#8fd8f0"/>
<circle cx="1341.7" cy="897.8" r="3.9" fill="#8fd8f0"/>
<circle cx="1372.2" cy="897.1" r="3.9" fill="#8fd8f0"/>
<circle cx="1402.6" cy="898.5" r="3.9" fill="#8fd8f0"/>
<circle cx="1433.1" cy="898.2" r="3.9" fill="#8fd8f0"/>
<circle cx="1463.5" cy="898.2" r="3.9" fill="#8fd8f0"/>
<circle cx="1493.9" cy="898.3" r="3.9" fill="#8fd8f0"/>
<circle cx="1524.4" cy="898.7" r="3.9" fill="#8fd8f0"/>
<circle cx="1554.8" cy="898.8" r="3.9" fill="#8fd8f0"/>
<circle cx="1585.3" cy="897.5" r="3.9" fill="#8fd8f0"/>
<circle cx="1615.7" cy="899.0" r="3.9" fill="#8fd8f0"/>
<circle cx="1646.1" cy="897.3" r="3.9" fill="#8fd8f0"/>
<circle cx="1676.6" cy="898.8" r="3.9" fill="#8fd8f0"/>
<polyline points="1159.1,898.6 1189.5,898.4 1220.0,897.9 1250.4,897.1 1280.9,898.0 1311.3,897.9 1341.7,898.3 1372.2,898.6 1402.6,896.1 1433.1,897.6 1463.5,896.3 1493.9,897.0 1524.4,898.5 1554.8,896.8 1585.3,896.3 1615.7,896.2 1646.1,897.9 1676.6,898.1" fill="none" stroke="#3a93c5" stroke-width="2.3" stroke-linejoin="round"/>
<circle cx="1159.1" cy="898.6" r="3.9" fill="#3a93c5"/>
<circle cx="1189.5" cy="898.4" r="3.9" fill="#3a93c5"/>
<circle cx="1220.0" cy="897.9" r="3.9" fill="#3a93c5"/>
<circle cx="1250.4" cy="897.1" r="3.9" fill="#3a93c5"/>
<circle cx="1280.9" cy="898.0" r="3.9" fill="#3a93c5"/>
<circle cx="1311.3" cy="897.9" r="3.9" fill="#3a93c5"/>
<circle cx="1341.7" cy="898.3" r="3.9" fill="#3a93c5"/>
<circle cx="1372.2" cy="898.6" r="3.9" fill="#3a93c5"/>
<circle cx="1402.6" cy="896.1" r="3.9" fill="#3a93c5"/>
<circle cx="1433.1" cy="897.6" r="3.9" fill="#3a93c5"/>
<circle cx="1463.5" cy="896.3" r="3.9" fill="#3a93c5"/>
<circle cx="1493.9" cy="897.0" r="3.9" fill="#3a93c5"/>
<circle cx="1524.4" cy="898.5" r="3.9" fill="#3a93c5"/>
<circle cx="1554.8" cy="896.8" r="3.9" fill="#3a93c5"/>
<circle cx="1585.3" cy="896.3" r="3.9" fill="#3a93c5"/>
<circle cx="1615.7" cy="896.2" r="3.9" fill="#3a93c5"/>
<circle cx="1646.1" cy="897.9" r="3.9" fill="#3a93c5"/>
<circle cx="1676.6" cy="898.1" r="3.9" fill="#3a93c5"/>
<polyline points="1159.1,895.4 1189.5,896.1 1220.0,896.4 1250.4,897.2 1280.9,896.6 1311.3,896.0 1341.7,897.0 1372.2,895.7 1402.6,895.2 1433.1,897.6 1463.5,897.7 1493.9,896.4 1524.4,895.3 1554.8,896.4 1585.3,897.1 1615.7,896.6 1646.1,896.1 1676.6,896.1" fill="none" stroke="#6cc3e2" stroke-width="2.3" stroke-linejoin="round"/>
<circle cx="1159.1" cy="895.4" r="3.9" fill="#6cc3e2"/>
<circle cx="1189.5" cy="896.1" r="3.9" fill="#6cc3e2"/>
<circle cx="1220.0" cy="896.4" r="3.9" fill="#6cc3e2"/>
<circle cx="1250.4" cy="897.2" r="3.9" fill="#6cc3e2"/>
<circle cx="1280.9" cy="896.6" r="3.9" fill="#6cc3e2"/>
<circle cx="1311.3" cy="896.0" r="3.9" fill="#6cc3e2"/>
<circle cx="1341.7" cy="897.0" r="3.9" fill="#6cc3e2"/>
<circle cx="1372.2" cy="895.7" r="3.9" fill="#6cc3e2"/>
<circle cx="1402.6" cy="895.2" r="3.9" fill="#6cc3e2"/>
<circle cx="1433.1" cy="897.6" r="3.9" fill="#6cc3e2"/>
<circle cx="1463.5" cy="897.7" r="3.9" fill="#6cc3e2"/>
<circle cx="1493.9" cy="896.4" r="3.9" fill="#6cc3e2"/>
<circle cx="1524.4" cy="895.3" r="3.9" fill="#6cc3e2"/>
<circle cx="1554.8" cy="896.4" r="3.9" fill="#6cc3e2"/>
<circle cx="1585.3" cy="897.1" r="3.9" fill="#6cc3e2"/>
<circle cx="1615.7" cy="896.6" r="3.9" fill="#6cc3e2"/>
<circle cx="1646.1" cy="896.1" r="3.9" fill="#6cc3e2"/>
<circle cx="1676.6" cy="896.1" r="3.9" fill="#6cc3e2"/>
<polyline points="1159.1,895.2 1189.5,895.4 1220.0,894.6 1250.4,894.4 1280.9,896.0 1311.3,896.3 1341.7,896.2 1372.2,896.3 1402.6,894.6 1433.1,895.0 1463.5,896.5 1493.9,894.3 1524.4,894.3 1554.8,894.7 1585.3,896.8 1615.7,895.2 1646.1,894.6 1676.6,895.7" fill="none" stroke="#2f7ab4" stroke-width="2.3" stroke-linejoin="round"/>
<circle cx="1159.1" cy="895.2" r="3.9" fill="#2f7ab4"/>
<circle cx="1189.5" cy="895.4" r="3.9" fill="#2f7ab4"/>
<circle cx="1220.0" cy="894.6" r="3.9" fill="#2f7ab4"/>
<circle cx="1250.4" cy="894.4" r="3.9" fill="#2f7ab4"/>
<circle cx="1280.9" cy="896.0" r="3.9" fill="#2f7ab4"/>
<circle cx="1311.3" cy="896.3" r="3.9" fill="#2f7ab4"/>
<circle cx="1341.7" cy="896.2" r="3.9" fill="#2f7ab4"/>
<circle cx="1372.2" cy="896.3" r="3.9" fill="#2f7ab4"/>
<circle cx="1402.6" cy="894.6" r="3.9" fill="#2f7ab4"/>
<circle cx="1433.1" cy="895.0" r="3.9" fill="#2f7ab4"/>
<circle cx="1463.5" cy="896.5" r="3.9" fill="#2f7ab4"/>
<circle cx="1493.9" cy="894.3" r="3.9" fill="#2f7ab4"/>
<circle cx="1524.4" cy="894.3" r="3.9" fill="#2f7ab4"/>
<circle cx="1554.8" cy="894.7" r="3.9" fill="#2f7ab4"/>
<circle cx="1585.3" cy="896.8" r="3.9" fill="#2f7ab4"/>
<circle cx="1615.7" cy="895.2" r="3.9" fill="#2f7ab4"/>
<circle cx="1646.1" cy="894.6" r="3.9" fill="#2f7ab4"/>
<circle cx="1676.6" cy="895.7" r="3.9" fill="#2f7ab4"/>
<polyline points="1159.1,895.8 1189.5,894.2 1220.0,894.9 1250.4,894.6 1280.9,893.5 1311.3,894.4 1341.7,894.2 1372.2,895.8 1402.6,895.4 1433.1,895.2 1463.5,895.9 1493.9,895.0 1524.4,895.1 1554.8,893.4 1585.3,895.1 1615.7,895.8 1646.1,893.7 1676.6,895.4" fill="none" stroke="#a6e4f5" stroke-width="2.3" stroke-linejoin="round"/>
<circle cx="1159.1" cy="895.8" r="3.9" fill="#a6e4f5"/>
<circle cx="1189.5" cy="894.2" r="3.9" fill="#a6e4f5"/>
<circle cx="1220.0" cy="894.9" r="3.9" fill="#a6e4f5"/>
<circle cx="1250.4" cy="894.6" r="3.9" fill="#a6e4f5"/>
<circle cx="1280.9" cy="893.5" r="3.9" fill="#a6e4f5"/>
<circle cx="1311.3" cy="894.4" r="3.9" fill="#a6e4f5"/>
<circle cx="1341.7" cy="894.2" r="3.9" fill="#a6e4f5"/>
<circle cx="1372.2" cy="895.8" r="3.9" fill="#a6e4f5"/>
<circle cx="1402.6" cy="895.4" r="3.9" fill="#a6e4f5"/>
<circle cx="1433.1" cy="895.2" r="3.9" fill="#a6e4f5"/>
<circle cx="1463.5" cy="895.9" r="3.9" fill="#a6e4f5"/>
<circle cx="1493.9" cy="895.0" r="3.9" fill="#a6e4f5"/>
<circle cx="1524.4" cy="895.1" r="3.9" fill="#a6e4f5"/>
<circle cx="1554.8" cy="893.4" r="3.9" fill="#a6e4f5"/>
<circle cx="1585.3" cy="895.1" r="3.9" fill="#a6e4f5"/>
<circle cx="1615.7" cy="895.8" r="3.9" fill="#a6e4f5"/>
<circle cx="1646.1" cy="893.7" r="3.9" fill="#a6e4f5"/>
<circle cx="1676.6" cy="895.4" r="3.9" fill="#a6e4f5"/>
<polyline points="1159.1,894.5 1189.5,894.2 1220.0,894.8 1250.4,894.3 1280.9,893.4 1311.3,894.4 1341.7,893.1 1372.2,894.8 1402.6,893.0 1433.1,894.6 1463.5,893.5 1493.9,894.0 1524.4,894.3 1554.8,893.4 1585.3,894.8 1615.7,892.6 1646.1,892.9 1676.6,894.6" fill="none" stroke="#2a73ab" stroke-width="2.3" stroke-linejoin="round"/>
<circle cx="1159.1" cy="894.5" r="3.9" fill="#2a73ab"/>
<circle cx="1189.5" cy="894.2" r="3.9" fill="#2a73ab"/>
<circle cx="1220.0" cy="894.8" r="3.9" fill="#2a73ab"/>
<circle cx="1250.4" cy="894.3" r="3.9" fill="#2a73ab"/>
<circle cx="1280.9" cy="893.4" r="3.9" fill="#2a73ab"/>
<circle cx="1311.3" cy="894.4" r="3.9" fill="#2a73ab"/>
<circle cx="1341.7" cy="893.1" r="3.9" fill="#2a73ab"/>
<circle cx="1372.2" cy="894.8" r="3.9" fill="#2a73ab"/>
<circle cx="1402.6" cy="893.0" r="3.9" fill="#2a73ab"/>
<circle cx="1433.1" cy="894.6" r="3.9" fill="#2a73ab"/>
<circle cx="1463.5" cy="893.5" r="3.9" fill="#2a73ab"/>
<circle cx="1493.9" cy="894.0" r="3.9" fill="#2a73ab"/>
<circle cx="1524.4" cy="894.3" r="3.9" fill="#2a73ab"/>
<circle cx="1554.8" cy="893.4" r="3.9" fill="#2a73ab"/>
<circle cx="1585.3" cy="894.8" r="3.9" fill="#2a73ab"/>
<circle cx="1615.7" cy="892.6" r="3.9" fill="#2a73ab"/>
<circle cx="1646.1" cy="892.9" r="3.9" fill="#2a73ab"/>
<circle cx="1676.6" cy="894.6" r="3.9" fill="#2a73ab"/>
<polyline points="1159.1,884.2 1189.5,884.2 1220.0,880.5 1250.4,875.4 1280.9,874.7 1311.3,876.1 1341.7,877.6 1372.2,871.8 1402.6,879.8 1433.1,878.0 1463.5,880.0 1493.9,878.0 1524.4,876.0 1554.8,878.0 1585.3,876.0 1615.7,872.0 1646.1,874.0 1676.6,872.0" fill="none" stroke="#2d6b9c" stroke-width="2.3" stroke-linejoin="round"/>
<circle cx="1159.1" cy="884.2" r="3.9" fill="#2d6b9c"/>
<circle cx="1189.5" cy="884.2" r="3.9" fill="#2d6b9c"/>
<circle cx="1220.0" cy="880.5" r="3.9" fill="#2d6b9c"/>
<circle cx="1250.4" cy="875.4" r="3.9" fill="#2d6b9c"/>
<circle cx="1280.9" cy="874.7" r="3.9" fill="#2d6b9c"/>
<circle cx="1311.3" cy="876.1" r="3.9" fill="#2d6b9c"/>
<circle cx="1341.7" cy="877.6" r="3.9" fill="#2d6b9c"/>
<circle cx="1372.2" cy="871.8" r="3.9" fill="#2d6b9c"/>
<circle cx="1402.6" cy="879.8" r="3.9" fill="#2d6b9c"/>
<circle cx="1433.1" cy="878.0" r="3.9" fill="#2d6b9c"/>
<circle cx="1463.5" cy="880.0" r="3.9" fill="#2d6b9c"/>
<circle cx="1493.9" cy="878.0" r="3.9" fill="#2d6b9c"/>
<circle cx="1524.4" cy="876.0" r="3.9" fill="#2d6b9c"/>
<circle cx="1554.8" cy="878.0" r="3.9" fill="#2d6b9c"/>
<circle cx="1585.3" cy="876.0" r="3.9" fill="#2d6b9c"/>
<circle cx="1615.7" cy="872.0" r="3.9" fill="#2d6b9c"/>
<circle cx="1646.1" cy="874.0" r="3.9" fill="#2d6b9c"/>
<circle cx="1676.6" cy="872.0" r="3.9" fill="#2d6b9c"/>
<polyline points="1159.1,878.3 1189.5,876.9 1220.0,874.7 1250.4,879.8 1280.9,882.0 1311.3,874.7 1341.7,864.5 1372.2,863.8 1402.6,874.0 1433.1,878.0 1463.5,876.0 1493.9,872.0 1524.4,870.0 1554.8,872.0 1585.3,868.0 1615.7,866.9 1646.1,847.4 1676.6,865.6" fill="none" stroke="#a8e6fa" stroke-width="2.3" stroke-linejoin="round"/>
<circle cx="1159.1" cy="878.3" r="3.9" fill="#a8e6fa"/>
<circle cx="1189.5" cy="876.9" r="3.9" fill="#a8e6fa"/>
<circle cx="1220.0" cy="874.7" r="3.9" fill="#a8e6fa"/>
<circle cx="1250.4" cy="879.8" r="3.9" fill="#a8e6fa"/>
<circle cx="1280.9" cy="882.0" r="3.9" fill="#a8e6fa"/>
<circle cx="1311.3" cy="874.7" r="3.9" fill="#a8e6fa"/>
<circle cx="1341.7" cy="864.5" r="3.9" fill="#a8e6fa"/>
<circle cx="1372.2" cy="863.8" r="3.9" fill="#a8e6fa"/>
<circle cx="1402.6" cy="874.0" r="3.9" fill="#a8e6fa"/>
<circle cx="1433.1" cy="878.0" r="3.9" fill="#a8e6fa"/>
<circle cx="1463.5" cy="876.0" r="3.9" fill="#a8e6fa"/>
<circle cx="1493.9" cy="872.0" r="3.9" fill="#a8e6fa"/>
<circle cx="1524.4" cy="870.0" r="3.9" fill="#a8e6fa"/>
<circle cx="1554.8" cy="872.0" r="3.9" fill="#a8e6fa"/>
<circle cx="1585.3" cy="868.0" r="3.9" fill="#a8e6fa"/>
<circle cx="1615.7" cy="866.9" r="3.9" fill="#a8e6fa"/>
<circle cx="1646.1" cy="847.4" r="3.9" fill="#a8e6fa"/>
<circle cx="1676.6" cy="865.6" r="3.9" fill="#a8e6fa"/>
<polyline points="1159.1,880.0 1189.5,878.0 1220.0,876.0 1250.4,872.0 1280.9,866.0 1311.3,868.0 1341.7,866.0 1372.2,860.0 1402.6,864.0 1433.1,864.3 1463.5,865.0 1493.9,861.7 1524.4,861.7 1554.8,861.0 1585.3,861.0 1615.7,850.0 1646.1,850.0 1676.6,861.7" fill="none" stroke="#3aa3cc" stroke-width="2.3" stroke-linejoin="round"/>
<circle cx="1159.1" cy="880.0" r="3.9" fill="#3aa3cc"/>
<circle cx="1189.5" cy="878.0" r="3.9" fill="#3aa3cc"/>
<circle cx="1220.0" cy="876.0" r="3.9" fill="#3aa3cc"/>
<circle cx="1250.4" cy="872.0" r="3.9" fill="#3aa3cc"/>
<circle cx="1280.9" cy="866.0" r="3.9" fill="#3aa3cc"/>
<circle cx="1311.3" cy="868.0" r="3.9" fill="#3aa3cc"/>
<circle cx="1341.7" cy="866.0" r="3.9" fill="#3aa3cc"/>
<circle cx="1372.2" cy="860.0" r="3.9" fill="#3aa3cc"/>
<circle cx="1402.6" cy="864.0" r="3.9" fill="#3aa3cc"/>
<circle cx="1433.1" cy="864.3" r="3.9" fill="#3aa3cc"/>
<circle cx="1463.5" cy="865.0" r="3.9" fill="#3aa3cc"/>
<circle cx="1493.9" cy="861.7" r="3.9" fill="#3aa3cc"/>
<circle cx="1524.4" cy="861.7" r="3.9" fill="#3aa3cc"/>
<circle cx="1554.8" cy="861.0" r="3.9" fill="#3aa3cc"/>
<circle cx="1585.3" cy="861.0" r="3.9" fill="#3aa3cc"/>
<circle cx="1615.7" cy="850.0" r="3.9" fill="#3aa3cc"/>
<circle cx="1646.1" cy="850.0" r="3.9" fill="#3aa3cc"/>
<circle cx="1676.6" cy="861.7" r="3.9" fill="#3aa3cc"/>
<polyline points="1159.1,867.4 1189.5,865.2 1220.0,871.0 1250.4,870.3 1280.9,874.7 1311.3,864.5 1341.7,871.8 1372.2,853.3 1402.6,868.1 1433.1,855.2 1463.5,856.5 1493.9,854.7 1524.4,854.7 1554.8,854.7 1585.3,848.7 1615.7,857.8 1646.1,863.0 1676.6,866.9" fill="none" stroke="#2f78b0" stroke-width="2.3" stroke-linejoin="round"/>
<circle cx="1159.1" cy="867.4" r="3.9" fill="#2f78b0"/>
<circle cx="1189.5" cy="865.2" r="3.9" fill="#2f78b0"/>
<circle cx="1220.0" cy="871.0" r="3.9" fill="#2f78b0"/>
<circle cx="1250.4" cy="870.3" r="3.9" fill="#2f78b0"/>
<circle cx="1280.9" cy="874.7" r="3.9" fill="#2f78b0"/>
<circle cx="1311.3" cy="864.5" r="3.9" fill="#2f78b0"/>
<circle cx="1341.7" cy="871.8" r="3.9" fill="#2f78b0"/>
<circle cx="1372.2" cy="853.3" r="3.9" fill="#2f78b0"/>
<circle cx="1402.6" cy="868.1" r="3.9" fill="#2f78b0"/>
<circle cx="1433.1" cy="855.2" r="3.9" fill="#2f78b0"/>
<circle cx="1463.5" cy="856.5" r="3.9" fill="#2f78b0"/>
<circle cx="1493.9" cy="854.7" r="3.9" fill="#2f78b0"/>
<circle cx="1524.4" cy="854.7" r="3.9" fill="#2f78b0"/>
<circle cx="1554.8" cy="854.7" r="3.9" fill="#2f78b0"/>
<circle cx="1585.3" cy="848.7" r="3.9" fill="#2f78b0"/>
<circle cx="1615.7" cy="857.8" r="3.9" fill="#2f78b0"/>
<circle cx="1646.1" cy="863.0" r="3.9" fill="#2f78b0"/>
<circle cx="1676.6" cy="866.9" r="3.9" fill="#2f78b0"/>
<polyline points="1159.1,857.9 1189.5,855.0 1220.0,851.4 1250.4,844.0 1280.9,847.0 1311.3,849.5 1341.7,847.2 1372.2,816.0 1402.6,846.2 1433.1,845.0 1463.5,843.0 1493.9,843.0 1524.4,837.6 1554.8,837.0 1585.3,832.4 1615.7,838.6 1646.1,841.7 1676.6,851.8" fill="none" stroke="#66b9d6" stroke-width="2.3" stroke-linejoin="round"/>
<circle cx="1159.1" cy="857.9" r="3.9" fill="#66b9d6"/>
<circle cx="1189.5" cy="855.0" r="3.9" fill="#66b9d6"/>
<circle cx="1220.0" cy="851.4" r="3.9" fill="#66b9d6"/>
<circle cx="1250.4" cy="844.0" r="3.9" fill="#66b9d6"/>
<circle cx="1280.9" cy="847.0" r="3.9" fill="#66b9d6"/>
<circle cx="1311.3" cy="849.5" r="3.9" fill="#66b9d6"/>
<circle cx="1341.7" cy="847.2" r="3.9" fill="#66b9d6"/>
<circle cx="1372.2" cy="816.0" r="3.9" fill="#66b9d6"/>
<circle cx="1402.6" cy="846.2" r="3.9" fill="#66b9d6"/>
<circle cx="1433.1" cy="845.0" r="3.9" fill="#66b9d6"/>
<circle cx="1463.5" cy="843.0" r="3.9" fill="#66b9d6"/>
<circle cx="1493.9" cy="843.0" r="3.9" fill="#66b9d6"/>
<circle cx="1524.4" cy="837.6" r="3.9" fill="#66b9d6"/>
<circle cx="1554.8" cy="837.0" r="3.9" fill="#66b9d6"/>
<circle cx="1585.3" cy="832.4" r="3.9" fill="#66b9d6"/>
<circle cx="1615.7" cy="838.6" r="3.9" fill="#66b9d6"/>
<circle cx="1646.1" cy="841.7" r="3.9" fill="#66b9d6"/>
<circle cx="1676.6" cy="851.8" r="3.9" fill="#66b9d6"/>
<polyline points="1159.1,871.8 1189.5,871.0 1220.0,861.6 1250.4,845.0 1280.9,836.2 1311.3,824.3 1341.7,809.4 1372.2,771.9 1402.6,815.4 1433.1,839.5 1463.5,836.3 1493.9,815.8 1524.4,832.5 1554.8,833.7 1585.3,828.0 1615.7,787.0 1646.1,768.7 1676.6,788.0" fill="none" stroke="#2b6fa7" stroke-width="2.3" stroke-linejoin="round"/>
<circle cx="1159.1" cy="871.8" r="3.9" fill="#2b6fa7"/>
<circle cx="1189.5" cy="871.0" r="3.9" fill="#2b6fa7"/>
<circle cx="1220.0" cy="861.6" r="3.9" fill="#2b6fa7"/>
<circle cx="1250.4" cy="845.0" r="3.9" fill="#2b6fa7"/>
<circle cx="1280.9" cy="836.2" r="3.9" fill="#2b6fa7"/>
<circle cx="1311.3" cy="824.3" r="3.9" fill="#2b6fa7"/>
<circle cx="1341.7" cy="809.4" r="3.9" fill="#2b6fa7"/>
<circle cx="1372.2" cy="771.9" r="3.9" fill="#2b6fa7"/>
<circle cx="1402.6" cy="815.4" r="3.9" fill="#2b6fa7"/>
<circle cx="1433.1" cy="839.5" r="3.9" fill="#2b6fa7"/>
<circle cx="1463.5" cy="836.3" r="3.9" fill="#2b6fa7"/>
<circle cx="1493.9" cy="815.8" r="3.9" fill="#2b6fa7"/>
<circle cx="1524.4" cy="832.5" r="3.9" fill="#2b6fa7"/>
<circle cx="1554.8" cy="833.7" r="3.9" fill="#2b6fa7"/>
<circle cx="1585.3" cy="828.0" r="3.9" fill="#2b6fa7"/>
<circle cx="1615.7" cy="787.0" r="3.9" fill="#2b6fa7"/>
<circle cx="1646.1" cy="768.7" r="3.9" fill="#2b6fa7"/>
<circle cx="1676.6" cy="788.0" r="3.9" fill="#2b6fa7"/>
<polyline points="1159.1,848.6 1189.5,853.0 1220.0,839.0 1250.4,816.4 1280.9,807.0 1311.3,795.8 1341.7,791.9 1372.2,747.3 1402.6,771.4 1433.1,793.5 1463.5,802.2 1493.9,769.2 1524.4,806.3 1554.8,810.0 1585.3,800.0 1615.7,730.0 1646.1,734.7 1676.6,757.5" fill="none" stroke="#255b8c" stroke-width="2.3" stroke-linejoin="round"/>
<circle cx="1159.1" cy="848.6" r="3.9" fill="#255b8c"/>
<circle cx="1189.5" cy="853.0" r="3.9" fill="#255b8c"/>
<circle cx="1220.0" cy="839.0" r="3.9" fill="#255b8c"/>
<circle cx="1250.4" cy="816.4" r="3.9" fill="#255b8c"/>
<circle cx="1280.9" cy="807.0" r="3.9" fill="#255b8c"/>
<circle cx="1311.3" cy="795.8" r="3.9" fill="#255b8c"/>
<circle cx="1341.7" cy="791.9" r="3.9" fill="#255b8c"/>
<circle cx="1372.2" cy="747.3" r="3.9" fill="#255b8c"/>
<circle cx="1402.6" cy="771.4" r="3.9" fill="#255b8c"/>
<circle cx="1433.1" cy="793.5" r="3.9" fill="#255b8c"/>
<circle cx="1463.5" cy="802.2" r="3.9" fill="#255b8c"/>
<circle cx="1493.9" cy="769.2" r="3.9" fill="#255b8c"/>
<circle cx="1524.4" cy="806.3" r="3.9" fill="#255b8c"/>
<circle cx="1554.8" cy="810.0" r="3.9" fill="#255b8c"/>
<circle cx="1585.3" cy="800.0" r="3.9" fill="#255b8c"/>
<circle cx="1615.7" cy="730.0" r="3.9" fill="#255b8c"/>
<circle cx="1646.1" cy="734.7" r="3.9" fill="#255b8c"/>
<circle cx="1676.6" cy="757.5" r="3.9" fill="#255b8c"/>
<polyline points="1159.1,771.6 1189.5,778.6 1220.0,779.7 1250.4,780.8 1280.9,787.0 1311.3,788.8 1341.7,779.4 1372.2,755.5 1402.6,731.7 1433.1,715.7 1463.5,711.7 1493.9,730.0 1524.4,736.7 1554.8,718.7 1585.3,712.5 1615.7,714.7 1646.1,723.0 1676.6,749.7" fill="none" stroke="#2a7bb1" stroke-width="2.3" stroke-linejoin="round"/>
<circle cx="1159.1" cy="771.6" r="3.9" fill="#2a7bb1"/>
<circle cx="1189.5" cy="778.6" r="3.9" fill="#2a7bb1"/>
<circle cx="1220.0" cy="779.7" r="3.9" fill="#2a7bb1"/>
<circle cx="1250.4" cy="780.8" r="3.9" fill="#2a7bb1"/>
<circle cx="1280.9" cy="787.0" r="3.9" fill="#2a7bb1"/>
<circle cx="1311.3" cy="788.8" r="3.9" fill="#2a7bb1"/>
<circle cx="1341.7" cy="779.4" r="3.9" fill="#2a7bb1"/>
<circle cx="1372.2" cy="755.5" r="3.9" fill="#2a7bb1"/>
<circle cx="1402.6" cy="731.7" r="3.9" fill="#2a7bb1"/>
<circle cx="1433.1" cy="715.7" r="3.9" fill="#2a7bb1"/>
<circle cx="1463.5" cy="711.7" r="3.9" fill="#2a7bb1"/>
<circle cx="1493.9" cy="730.0" r="3.9" fill="#2a7bb1"/>
<circle cx="1524.4" cy="736.7" r="3.9" fill="#2a7bb1"/>
<circle cx="1554.8" cy="718.7" r="3.9" fill="#2a7bb1"/>
<circle cx="1585.3" cy="712.5" r="3.9" fill="#2a7bb1"/>
<circle cx="1615.7" cy="714.7" r="3.9" fill="#2a7bb1"/>
<circle cx="1646.1" cy="723.0" r="3.9" fill="#2a7bb1"/>
<circle cx="1676.6" cy="749.7" r="3.9" fill="#2a7bb1"/>
<polyline points="1159.1,809.4 1189.5,803.9 1220.0,778.9 1250.4,741.9 1280.9,726.2 1311.3,693.4 1341.7,673.0 1372.2,583.1 1402.6,657.0 1433.1,708.7 1463.5,697.5 1493.9,707.2 1524.4,724.5 1554.8,730.0 1585.3,711.7 1615.7,560.5 1646.1,481.5 1676.6,462.3" fill="none" stroke="#a3e2f7" stroke-width="2.3" stroke-linejoin="round"/>
<circle cx="1159.1" cy="809.4" r="3.9" fill="#a3e2f7"/>
<circle cx="1189.5" cy="803.9" r="3.9" fill="#a3e2f7"/>
<circle cx="1220.0" cy="778.9" r="3.9" fill="#a3e2f7"/>
<circle cx="1250.4" cy="741.9" r="3.9" fill="#a3e2f7"/>
<circle cx="1280.9" cy="726.2" r="3.9" fill="#a3e2f7"/>
<circle cx="1311.3" cy="693.4" r="3.9" fill="#a3e2f7"/>
<circle cx="1341.7" cy="673.0" r="3.9" fill="#a3e2f7"/>
<circle cx="1372.2" cy="583.1" r="3.9" fill="#a3e2f7"/>
<circle cx="1402.6" cy="657.0" r="3.9" fill="#a3e2f7"/>
<circle cx="1433.1" cy="708.7" r="3.9" fill="#a3e2f7"/>
<circle cx="1463.5" cy="697.5" r="3.9" fill="#a3e2f7"/>
<circle cx="1493.9" cy="707.2" r="3.9" fill="#a3e2f7"/>
<circle cx="1524.4" cy="724.5" r="3.9" fill="#a3e2f7"/>
<circle cx="1554.8" cy="730.0" r="3.9" fill="#a3e2f7"/>
<circle cx="1585.3" cy="711.7" r="3.9" fill="#a3e2f7"/>
<circle cx="1615.7" cy="560.5" r="3.9" fill="#a3e2f7"/>
<circle cx="1646.1" cy="481.5" r="3.9" fill="#a3e2f7"/>
<circle cx="1676.6" cy="462.3" r="3.9" fill="#a3e2f7"/>
</g>
<text x="1332.8" y="573.8" font-family='"Liberation Mono", monospace' font-size="16.08" font-weight="normal" fill="#404040" text-anchor="start" textLength="78.6" lengthAdjust="spacingAndGlyphs">12 092,64</text>
<text x="1596.2" y="452.8" font-family='"Liberation Mono", monospace' font-size="16.08" font-weight="normal" fill="#404040" text-anchor="start" textLength="78.6" lengthAdjust="spacingAndGlyphs">16 693,46</text>
<text x="1565.5" y="471.5" font-family='"Liberation Mono", monospace' font-size="16.08" font-weight="normal" fill="#404040" text-anchor="start" textLength="78.6" lengthAdjust="spacingAndGlyphs">15 960,61</text>
<text x="1534.5" y="551.6" font-family='"Liberation Mono", monospace' font-size="16.08" font-weight="normal" fill="#404040" text-anchor="start" textLength="78.6" lengthAdjust="spacingAndGlyphs">12 939,85</text>
<text x="1404.7" y="647.2" font-family='"Liberation Mono", monospace' font-size="16.08" font-weight="normal" fill="#404040" text-anchor="start" textLength="67.8" lengthAdjust="spacingAndGlyphs">9 273,61</text>
<text x="1242.2" y="683.6" font-family='"Liberation Mono", monospace' font-size="16.08" font-weight="normal" fill="#404040" text-anchor="start" textLength="67.8" lengthAdjust="spacingAndGlyphs">7 879,77</text>
<text x="1343.8" y="694.5" font-family='"Liberation Mono", monospace' font-size="16.08" font-weight="normal" fill="#404040" text-anchor="start" textLength="67.8" lengthAdjust="spacingAndGlyphs">8 675,86</text>
<text x="1430.3" y="687.0" font-family='"Liberation Mono", monospace' font-size="16.08" font-weight="normal" fill="#404040" text-anchor="start" textLength="67.8" lengthAdjust="spacingAndGlyphs">7 730,70</text>
<text x="1515.0" y="701.3" font-family='"Liberation Mono", monospace' font-size="16.08" font-weight="normal" fill="#404040" text-anchor="start" textLength="67.8" lengthAdjust="spacingAndGlyphs">7 196,65</text>
<text x="1618.3" y="704.2" font-family='"Liberation Mono", monospace' font-size="16.08" font-weight="normal" fill="#404040" text-anchor="start" textLength="67.8" lengthAdjust="spacingAndGlyphs">7 070,97</text>
<text x="1180.8" y="731.7" font-family='"Liberation Mono", monospace' font-size="16.08" font-weight="normal" fill="#404040" text-anchor="start" textLength="67.8" lengthAdjust="spacingAndGlyphs">6 050,76</text>
<text x="1331.7" y="721.1" font-family='"Liberation Mono", monospace' font-size="16.08" font-weight="normal" fill="#404040" text-anchor="start" textLength="67.8" lengthAdjust="spacingAndGlyphs">6 438,86</text>
<text x="1283.3" y="746.9" font-family='"Liberation Mono", monospace' font-size="16.08" font-weight="normal" fill="#404040" text-anchor="start" textLength="67.8" lengthAdjust="spacingAndGlyphs">6 645,09</text>
<text x="1253.1" y="770.6" font-family='"Liberation Mono", monospace' font-size="16.08" font-weight="normal" fill="#404040" text-anchor="start" textLength="67.8" lengthAdjust="spacingAndGlyphs">4 571,56</text>
<text x="1405.0" y="760.8" font-family='"Liberation Mono", monospace' font-size="16.08" font-weight="normal" fill="#404040" text-anchor="start" textLength="67.8" lengthAdjust="spacingAndGlyphs">4 925,58</text>
<text x="1496.3" y="759.7" font-family='"Liberation Mono", monospace' font-size="16.08" font-weight="normal" fill="#404040" text-anchor="start" textLength="67.8" lengthAdjust="spacingAndGlyphs">4 993,13</text>
<text x="1517.5" y="789.2" font-family='"Liberation Mono", monospace' font-size="16.08" font-weight="normal" fill="#404040" text-anchor="start" textLength="67.8" lengthAdjust="spacingAndGlyphs">3 837,19</text>
<text x="1161.7" y="830.2" font-family='"Liberation Mono", monospace' font-size="16.08" font-weight="normal" fill="#404040" text-anchor="start" textLength="67.8" lengthAdjust="spacingAndGlyphs">3 471,88</text>
<text x="1618.0" y="808.0" font-family='"Liberation Mono", monospace' font-size="16.08" font-weight="normal" fill="#404040" text-anchor="start" textLength="67.8" lengthAdjust="spacingAndGlyphs">4 324,37</text>
<text x="1618.0" y="828.3" font-family='"Liberation Mono", monospace' font-size="16.08" font-weight="normal" fill="#404040" text-anchor="start" textLength="67.8" lengthAdjust="spacingAndGlyphs">2 366,90</text>
<text x="1163.3" y="915.8" font-family='"Liberation Mono", monospace' font-size="17.45" font-weight="normal" fill="#595959" text-anchor="end" textLength="62.0" lengthAdjust="spacingAndGlyphs" transform="rotate(-40 1163.3 915.8)">2020-янв</text>
<text x="1193.7" y="915.8" font-family='"Liberation Mono", monospace' font-size="17.45" font-weight="normal" fill="#595959" text-anchor="end" textLength="62.0" lengthAdjust="spacingAndGlyphs" transform="rotate(-40 1193.7 915.8)">2020-фев</text>
<text x="1224.2" y="915.8" font-family='"Liberation Mono", monospace' font-size="17.45" font-weight="normal" fill="#595959" text-anchor="end" textLength="62.0" lengthAdjust="spacingAndGlyphs" transform="rotate(-40 1224.2 915.8)">2020-мар</text>
<text x="1254.6" y="915.8" font-family='"Liberation Mono", monospace' font-size="17.45" font-weight="normal" fill="#595959" text-anchor="end" textLength="62.0" lengthAdjust="spacingAndGlyphs" transform="rotate(-40 1254.6 915.8)">2020-апр</text>
<text x="1285.1" y="915.8" font-family='"Liberation Mono", monospace' font-size="17.45" font-weight="normal" fill="#595959" text-anchor="end" textLength="62.0" lengthAdjust="spacingAndGlyphs" transform="rotate(-40 1285.1 915.8)">2020-май</text>
<text x="1315.5" y="915.8" font-family='"Liberation Mono", monospace' font-size="17.45" font-weight="normal" fill="#595959" text-anchor="end" textLength="62.0" lengthAdjust="spacingAndGlyphs" transform="rotate(-40 1315.5 915.8)">2020-июн</text>
<text x="1345.9" y="915.8" font-family='"Liberation Mono", monospace' font-size="17.45" font-weight="normal" fill="#595959" text-anchor="end" textLength="62.0" lengthAdjust="spacingAndGlyphs" transform="rotate(-40 1345.9 915.8)">2020-июл</text>
<text x="1376.4" y="915.8" font-family='"Liberation Mono", monospace' font-size="17.45" font-weight="normal" fill="#595959" text-anchor="end" textLength="62.0" lengthAdjust="spacingAndGlyphs" transform="rotate(-40 1376.4 915.8)">2020-авг</text>
<text x="1406.8" y="915.8" font-family='"Liberation Mono", monospace' font-size="17.45" font-weight="normal" fill="#595959" text-anchor="end" textLength="62.0" lengthAdjust="spacingAndGlyphs" transform="rotate(-40 1406.8 915.8)">2020-сен</text>
<text x="1437.3" y="915.8" font-family='"Liberation Mono", monospace' font-size="17.45" font-weight="normal" fill="#595959" text-anchor="end" textLength="62.0" lengthAdjust="spacingAndGlyphs" transform="rotate(-40 1437.3 915.8)">2020-окт</text>
<text x="1467.7" y="915.8" font-family='"Liberation Mono", monospace' font-size="17.45" font-weight="normal" fill="#595959" text-anchor="end" textLength="62.0" lengthAdjust="spacingAndGlyphs" transform="rotate(-40 1467.7 915.8)">2020-ноя</text>
<text x="1498.1" y="915.8" font-family='"Liberation Mono", monospace' font-size="17.45" font-weight="normal" fill="#595959" text-anchor="end" textLength="62.0" lengthAdjust="spacingAndGlyphs" transform="rotate(-40 1498.1 915.8)">2020-дек</text>
<text x="1528.6" y="915.8" font-family='"Liberation Mono", monospace' font-size="17.45" font-weight="normal" fill="#595959" text-anchor="end" textLength="62.0" lengthAdjust="spacingAndGlyphs" transform="rotate(-40 1528.6 915.8)">2021-янв</text>
<text x="1559.0" y="915.8" font-family='"Liberation Mono", monospace' font-size="17.45" font-weight="normal" fill="#595959" text-anchor="end" textLength="62.0" lengthAdjust="spacingAndGlyphs" transform="rotate(-40 1559.0 915.8)">2021-фев</text>
<text x="1589.5" y="915.8" font-family='"Liberation Mono", monospace' font-size="17.45" font-weight="normal" fill="#595959" text-anchor="end" textLength="62.0" lengthAdjust="spacingAndGlyphs" transform="rotate(-40 1589.5 915.8)">2021-мар</text>
<text x="1619.9" y="915.8" font-family='"Liberation Mono", monospace' font-size="17.45" font-weight="normal" fill="#595959" text-anchor="end" textLength="62.0" lengthAdjust="spacingAndGlyphs" transform="rotate(-40 1619.9 915.8)">2021-апр</text>
<text x="1650.3" y="915.8" font-family='"Liberation Mono", monospace' font-size="17.45" font-weight="normal" fill="#595959" text-anchor="end" textLength="62.0" lengthAdjust="spacingAndGlyphs" transform="rotate(-40 1650.3 915.8)">2021-май</text>
<text x="1680.8" y="915.8" font-family='"Liberation Mono", monospace' font-size="17.45" font-weight="normal" fill="#595959" text-anchor="end" textLength="62.0" lengthAdjust="spacingAndGlyphs" transform="rotate(-40 1680.8 915.8)">2021-июн</text>
<line x1="1702" y1="406.6" x2="1717" y2="406.6" stroke="#66b9d6" stroke-width="2.3"/>
<circle cx="1709.5" cy="406.6" r="3.6" fill="#66b9d6"/>
<text x="1728.0" y="413.9" font-family='"Liberation Sans", sans-serif' font-size="15.84" font-weight="normal" fill="#595959" text-anchor="start" textLength="95.4" lengthAdjust="spacingAndGlyphs">1/2 изделия</text>
<line x1="1702" y1="453.5" x2="1717" y2="453.5" stroke="#72c6e4" stroke-width="2.3"/>
<circle cx="1709.5" cy="453.5" r="3.6" fill="#72c6e4"/>
<text x="1728.0" y="449.6" font-family='"Liberation Sans", sans-serif' font-size="15.84" font-weight="normal" fill="#595959" text-anchor="start" textLength="129.5" lengthAdjust="spacingAndGlyphs">1/2 изделия или</text>
<text x="1728.0" y="470.5" font-family='"Liberation Sans", sans-serif' font-size="15.84" font-weight="normal" fill="#595959" text-anchor="start" textLength="70.3" lengthAdjust="spacingAndGlyphs">штучный</text>
<line x1="1702" y1="500.8" x2="1717" y2="500.8" stroke="#3a8fc0" stroke-width="2.3"/>
<circle cx="1709.5" cy="500.8" r="3.6" fill="#3a8fc0"/>
<text x="1728.0" y="507.6" font-family='"Liberation Sans", sans-serif' font-size="15.84" font-weight="normal" fill="#595959" text-anchor="start" textLength="127.8" lengthAdjust="spacingAndGlyphs">Безалкогольное</text>
<line x1="1702" y1="547.6" x2="1717" y2="547.6" stroke="#2a5f8f" stroke-width="2.3"/>
<circle cx="1709.5" cy="547.6" r="3.6" fill="#2a5f8f"/>
<text x="1728.0" y="543.8" font-family='"Liberation Sans", sans-serif' font-size="15.84" font-weight="normal" fill="#595959" text-anchor="start" textLength="129.9" lengthAdjust="spacingAndGlyphs">Безалкогольные</text>
<text x="1728.0" y="564.7" font-family='"Liberation Sans", sans-serif' font-size="15.84" font-weight="normal" fill="#595959" text-anchor="start" textLength="142.7" lengthAdjust="spacingAndGlyphs">энергетические ...</text>
<line x1="1702" y1="594.9" x2="1717" y2="594.9" stroke="#7dd4f0" stroke-width="2.3"/>
<circle cx="1709.5" cy="594.9" r="3.6" fill="#7dd4f0"/>
<text x="1728.0" y="590.9" font-family='"Liberation Sans", sans-serif' font-size="15.84" font-weight="normal" fill="#595959" text-anchor="start" textLength="149.7" lengthAdjust="spacingAndGlyphs">Вареные продукты</text>
<text x="1728.0" y="611.5" font-family='"Liberation Sans", sans-serif' font-size="15.84" font-weight="normal" fill="#595959" text-anchor="start" textLength="24.0" lengthAdjust="spacingAndGlyphs">2/г</text>
<line x1="1702" y1="642.0" x2="1717" y2="642.0" stroke="#3a9ac4" stroke-width="2.3"/>
<circle cx="1709.5" cy="642.0" r="3.6" fill="#3a9ac4"/>
<text x="1728.0" y="648.5" font-family='"Liberation Sans", sans-serif' font-size="15.84" font-weight="normal" fill="#595959" text-anchor="start" textLength="64.0" lengthAdjust="spacingAndGlyphs">Весовая</text>
<line x1="1702" y1="689.2" x2="1717" y2="689.2" stroke="#8fdcf6" stroke-width="2.3"/>
<circle cx="1709.5" cy="689.2" r="3.6" fill="#8fdcf6"/>
<text x="1728.0" y="696.0" font-family='"Liberation Sans", sans-serif' font-size="15.84" font-weight="normal" fill="#595959" text-anchor="start" textLength="132.7" lengthAdjust="spacingAndGlyphs">Ветчина вареная</text>
<line x1="1702" y1="736.7" x2="1717" y2="736.7" stroke="#2f6ea6" stroke-width="2.3"/>
<circle cx="1709.5" cy="736.7" r="3.6" fill="#2f6ea6"/>
<text x="1728.0" y="743.2" font-family='"Liberation Sans", sans-serif' font-size="15.84" font-weight="normal" fill="#595959" text-anchor="start" textLength="109.1" lengthAdjust="spacingAndGlyphs">Газированная</text>
<line x1="1702" y1="783.3" x2="1717" y2="783.3" stroke="#90dcf6" stroke-width="2.3"/>
<circle cx="1709.5" cy="783.3" r="3.6" fill="#90dcf6"/>
<text x="1728.0" y="789.8" font-family='"Liberation Sans", sans-serif' font-size="15.84" font-weight="normal" fill="#595959" text-anchor="start" textLength="46.6" lengthAdjust="spacingAndGlyphs">Зельц</text>
<line x1="1702" y1="830.0" x2="1717" y2="830.0" stroke="#3aa6cc" stroke-width="2.3"/>
<circle cx="1709.5" cy="830.0" r="3.6" fill="#3aa6cc"/>
<text x="1728.0" y="836.5" font-family='"Liberation Sans", sans-serif' font-size="15.84" font-weight="normal" fill="#595959" text-anchor="start" textLength="70.7" lengthAdjust="spacingAndGlyphs">из птицы</text>
<path d="M1773.9 867.6 H1785 L1779.45 875.4 Z" fill="#595959"/>
<path d="M1813.5 875.4 H1825.2 L1819.35 867.6 Z" fill="#a6a6a6"/>
</svg>
</body></html>
